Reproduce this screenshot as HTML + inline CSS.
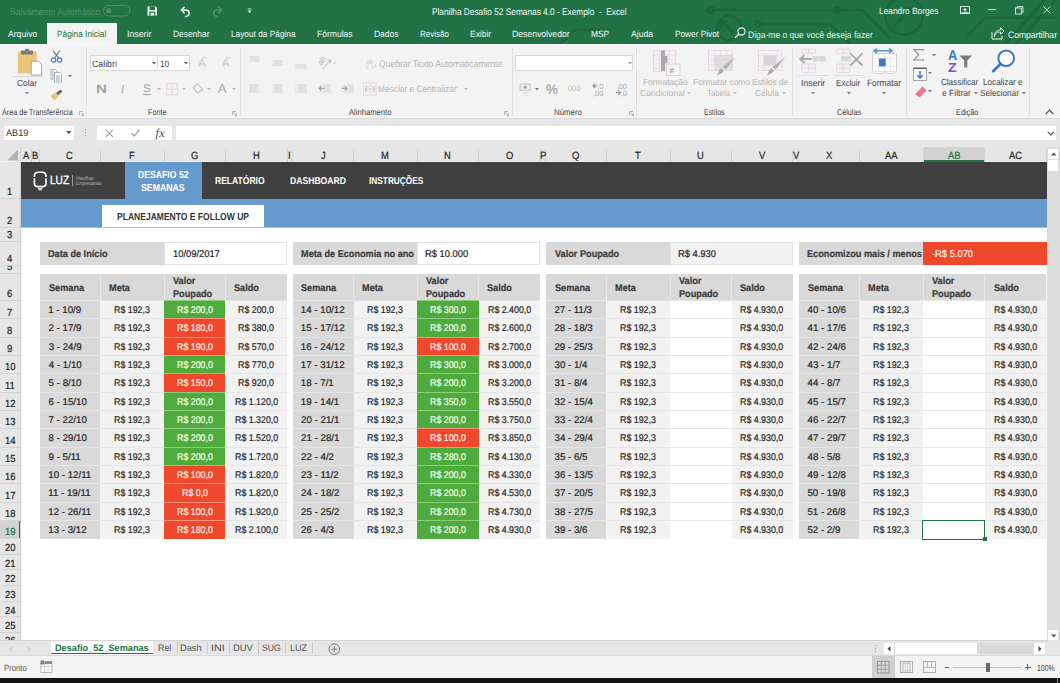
<!DOCTYPE html><html><head><meta charset="utf-8"><style>
html,body{margin:0;padding:0}
body{width:1060px;height:683px;overflow:hidden;position:relative;background:#fff;font-family:"Liberation Sans",sans-serif;text-rendering:geometricPrecision}
.a{position:absolute}
.t{white-space:nowrap;line-height:1;transform-origin:0 0}
.s .t{-webkit-text-stroke:0.2px currentColor}
svg{position:absolute;overflow:visible}
</style></head><body>
<div class="a" style="left:0.00px;top:0.00px;width:1060.00px;height:44.00px;background:#217346;"></div>
<div class="a" style="left:0.00px;top:44.00px;width:1060.00px;height:73.50px;background:#F3F3F3;"></div>
<div class="a" style="left:0.00px;top:44.00px;width:1060.00px;height:1.00px;background:#F9F9F9;"></div>
<div class="a" style="left:0.00px;top:117.50px;width:1060.00px;height:1.00px;background:#DADADA;"></div>
<div class="a" style="left:0.00px;top:118.50px;width:1060.00px;height:28.50px;background:#E6E6E6;"></div>
<div class="a" style="left:0.00px;top:147.00px;width:1046.50px;height:15.00px;background:#E6E6E6;"></div>
<div class="a" style="left:0.00px;top:161.20px;width:1046.50px;height:0.80px;background:#F0F0F0;"></div>
<div class="a" style="left:0.00px;top:162.00px;width:20.00px;height:478.00px;background:#E6E6E6;"></div>
<div class="a" style="left:19.50px;top:147.00px;width:1.00px;height:493.00px;background:#D0D0D0;"></div>
<svg style="left:0;top:147px" width="20" height="15"><path d="M7 13.5 L18 13.5 L18 2.5 Z" fill="#B4B4B4"/></svg>
<div class="a" style="left:99.80px;top:149.00px;width:1.00px;height:12.50px;background:#D2D2D2;"></div>
<div class="a" style="left:163.70px;top:149.00px;width:1.00px;height:12.50px;background:#D2D2D2;"></div>
<div class="a" style="left:225.00px;top:149.00px;width:1.00px;height:12.50px;background:#D2D2D2;"></div>
<div class="a" style="left:286.90px;top:149.00px;width:1.00px;height:12.50px;background:#D2D2D2;"></div>
<div class="a" style="left:291.60px;top:149.00px;width:1.00px;height:12.50px;background:#D2D2D2;"></div>
<div class="a" style="left:353.00px;top:149.00px;width:1.00px;height:12.50px;background:#D2D2D2;"></div>
<div class="a" style="left:416.50px;top:149.00px;width:1.00px;height:12.50px;background:#D2D2D2;"></div>
<div class="a" style="left:478.10px;top:149.00px;width:1.00px;height:12.50px;background:#D2D2D2;"></div>
<div class="a" style="left:539.70px;top:149.00px;width:1.00px;height:12.50px;background:#D2D2D2;"></div>
<div class="a" style="left:545.10px;top:149.00px;width:1.00px;height:12.50px;background:#D2D2D2;"></div>
<div class="a" style="left:606.00px;top:149.00px;width:1.00px;height:12.50px;background:#D2D2D2;"></div>
<div class="a" style="left:669.60px;top:149.00px;width:1.00px;height:12.50px;background:#D2D2D2;"></div>
<div class="a" style="left:731.10px;top:149.00px;width:1.00px;height:12.50px;background:#D2D2D2;"></div>
<div class="a" style="left:792.40px;top:149.00px;width:1.00px;height:12.50px;background:#D2D2D2;"></div>
<div class="a" style="left:798.00px;top:149.00px;width:1.00px;height:12.50px;background:#D2D2D2;"></div>
<div class="a" style="left:858.60px;top:149.00px;width:1.00px;height:12.50px;background:#D2D2D2;"></div>
<div class="a" style="left:922.50px;top:149.00px;width:1.00px;height:12.50px;background:#D2D2D2;"></div>
<div class="a" style="left:984.20px;top:149.00px;width:1.00px;height:12.50px;background:#D2D2D2;"></div>
<div class="a" style="left:1046.00px;top:149.00px;width:1.00px;height:12.50px;background:#D2D2D2;"></div>
<div class="a" style="left:31.00px;top:149.00px;width:1.00px;height:12.50px;background:#D2D2D2;"></div>
<div class="a" style="left:39.00px;top:149.00px;width:1.00px;height:12.50px;background:#D2D2D2;"></div>
<div class="s">
<div class="a t" style="left:22.53px;top:152.00px;font-size:10.43px;color:#1E1E1E;transform:scaleX(0.9000);">A</div>
<div class="a t" style="left:32.14px;top:152.00px;font-size:10.43px;color:#1E1E1E;transform:scaleX(0.9000);">B</div>
<div class="a t" style="left:66.45px;top:152.00px;font-size:10.43px;color:#1E1E1E;transform:scaleX(0.9000);">C</div>
<div class="a t" style="left:129.17px;top:152.00px;font-size:10.43px;color:#1E1E1E;transform:scaleX(0.9000);">F</div>
<div class="a t" style="left:191.30px;top:152.00px;font-size:10.43px;color:#1E1E1E;transform:scaleX(0.9000);">G</div>
<div class="a t" style="left:253.05px;top:152.00px;font-size:10.43px;color:#1E1E1E;transform:scaleX(0.9000);">H</div>
<div class="a t" style="left:288.44px;top:152.00px;font-size:10.43px;color:#1E1E1E;transform:scaleX(0.9000);">I</div>
<div class="a t" style="left:320.71px;top:152.00px;font-size:10.43px;color:#1E1E1E;transform:scaleX(0.9000);">J</div>
<div class="a t" style="left:381.33px;top:152.00px;font-size:10.43px;color:#1E1E1E;transform:scaleX(0.9000);">M</div>
<div class="a t" style="left:444.40px;top:152.00px;font-size:10.43px;color:#1E1E1E;transform:scaleX(0.9000);">N</div>
<div class="a t" style="left:505.76px;top:152.00px;font-size:10.43px;color:#1E1E1E;transform:scaleX(0.9000);">O</div>
<div class="a t" style="left:539.64px;top:152.00px;font-size:10.43px;color:#1E1E1E;transform:scaleX(0.9000);">P</div>
<div class="a t" style="left:572.41px;top:152.00px;font-size:10.43px;color:#1E1E1E;transform:scaleX(0.9000);">Q</div>
<div class="a t" style="left:635.44px;top:152.00px;font-size:10.43px;color:#1E1E1E;transform:scaleX(0.9000);">T</div>
<div class="a t" style="left:697.47px;top:152.00px;font-size:10.43px;color:#1E1E1E;transform:scaleX(0.9000);">U</div>
<div class="a t" style="left:759.13px;top:152.00px;font-size:10.43px;color:#1E1E1E;transform:scaleX(0.9000);">V</div>
<div class="a t" style="left:792.58px;top:152.00px;font-size:10.43px;color:#1E1E1E;transform:scaleX(0.9000);">V</div>
<div class="a t" style="left:825.65px;top:152.00px;font-size:10.43px;color:#1E1E1E;transform:scaleX(0.9000);">X</div>
<div class="a t" style="left:884.80px;top:152.00px;font-size:10.43px;color:#1E1E1E;transform:scaleX(0.9000);">AA</div>
<div class="a" style="left:923.50px;top:147.00px;width:60.70px;height:15.00px;background:#D2D2D2;"></div>
<div class="a" style="left:923.50px;top:160.00px;width:60.70px;height:2.00px;background:#217346;"></div>
<div class="a t" style="left:947.84px;top:152.00px;font-size:10.43px;color:#217346;transform:scaleX(0.9000);">AB</div>
<div class="a t" style="left:1009.26px;top:152.00px;font-size:10.43px;color:#1E1E1E;transform:scaleX(0.9000);">AC</div>
<div class="a" style="left:0.00px;top:198.10px;width:19.50px;height:1.00px;background:#D4D4D4;"></div>
<div class="a" style="left:0;top:162.50px;width:19.5px;height:36.10px;overflow:hidden"><div style="position:relative;left:0;top:-162.50px">
<div class="a t" style="left:7.23px;top:188.00px;font-size:10.29px;color:#222222;transform:scaleX(0.9200);">1</div>
</div></div>
<div class="a" style="left:0.00px;top:227.00px;width:19.50px;height:1.00px;background:#D4D4D4;"></div>
<div class="a" style="left:0;top:198.60px;width:19.5px;height:28.90px;overflow:hidden"><div style="position:relative;left:0;top:-198.60px">
<div class="a t" style="left:7.35px;top:217.00px;font-size:10.29px;color:#222222;transform:scaleX(0.9200);">2</div>
</div></div>
<div class="a" style="left:0.00px;top:240.80px;width:19.50px;height:1.00px;background:#D4D4D4;"></div>
<div class="a" style="left:0;top:227.50px;width:19.5px;height:13.80px;overflow:hidden"><div style="position:relative;left:0;top:-227.50px">
<div class="a t" style="left:7.40px;top:231.00px;font-size:10.29px;color:#222222;transform:scaleX(0.9200);">3</div>
</div></div>
<div class="a" style="left:0.00px;top:265.00px;width:19.50px;height:1.00px;background:#D4D4D4;"></div>
<div class="a" style="left:0;top:241.30px;width:19.5px;height:24.20px;overflow:hidden"><div style="position:relative;left:0;top:-241.30px">
<div class="a t" style="left:7.40px;top:255.00px;font-size:10.29px;color:#222222;transform:scaleX(0.9200);">4</div>
</div></div>
<div class="a" style="left:0.00px;top:272.90px;width:19.50px;height:1.00px;background:#D4D4D4;"></div>
<div class="a" style="left:0;top:265.50px;width:19.5px;height:7.90px;overflow:hidden"><div style="position:relative;left:0;top:-265.50px">
<div class="a t" style="left:7.37px;top:263.00px;font-size:10.29px;color:#222222;transform:scaleX(0.9200);">5</div>
</div></div>
<div class="a" style="left:0.00px;top:300.00px;width:19.50px;height:1.00px;background:#D4D4D4;"></div>
<div class="a" style="left:0;top:273.40px;width:19.5px;height:27.10px;overflow:hidden"><div style="position:relative;left:0;top:-273.40px">
<div class="a t" style="left:7.33px;top:290.00px;font-size:10.29px;color:#222222;transform:scaleX(0.9200);">6</div>
</div></div>
<div class="a" style="left:0.00px;top:318.32px;width:19.50px;height:1.00px;background:#D4D4D4;"></div>
<div class="a" style="left:0;top:300.50px;width:19.5px;height:18.32px;overflow:hidden"><div style="position:relative;left:0;top:-300.50px">
<div class="a t" style="left:7.35px;top:309.00px;font-size:10.29px;color:#222222;transform:scaleX(0.9200);">7</div>
</div></div>
<div class="a" style="left:0.00px;top:336.64px;width:19.50px;height:1.00px;background:#D4D4D4;"></div>
<div class="a" style="left:0;top:318.82px;width:19.5px;height:18.32px;overflow:hidden"><div style="position:relative;left:0;top:-318.82px">
<div class="a t" style="left:7.37px;top:327.00px;font-size:10.29px;color:#222222;transform:scaleX(0.9200);">8</div>
</div></div>
<div class="a" style="left:0.00px;top:354.96px;width:19.50px;height:1.00px;background:#D4D4D4;"></div>
<div class="a" style="left:0;top:337.14px;width:19.5px;height:18.32px;overflow:hidden"><div style="position:relative;left:0;top:-337.14px">
<div class="a t" style="left:7.37px;top:345.00px;font-size:10.29px;color:#222222;transform:scaleX(0.9200);">9</div>
</div></div>
<div class="a" style="left:0.00px;top:373.28px;width:19.50px;height:1.00px;background:#D4D4D4;"></div>
<div class="a" style="left:0;top:355.46px;width:19.5px;height:18.32px;overflow:hidden"><div style="position:relative;left:0;top:-355.46px">
<div class="a t" style="left:4.56px;top:363.00px;font-size:10.29px;color:#222222;transform:scaleX(0.9200);">10</div>
</div></div>
<div class="a" style="left:0.00px;top:391.60px;width:19.50px;height:1.00px;background:#D4D4D4;"></div>
<div class="a" style="left:0;top:373.78px;width:19.5px;height:18.32px;overflow:hidden"><div style="position:relative;left:0;top:-373.78px">
<div class="a t" style="left:4.96px;top:382.00px;font-size:10.29px;color:#222222;transform:scaleX(0.9200);">11</div>
</div></div>
<div class="a" style="left:0.00px;top:409.92px;width:19.50px;height:1.00px;background:#D4D4D4;"></div>
<div class="a" style="left:0;top:392.10px;width:19.5px;height:18.32px;overflow:hidden"><div style="position:relative;left:0;top:-392.10px">
<div class="a t" style="left:4.60px;top:400.00px;font-size:10.29px;color:#222222;transform:scaleX(0.9200);">12</div>
</div></div>
<div class="a" style="left:0.00px;top:428.24px;width:19.50px;height:1.00px;background:#D4D4D4;"></div>
<div class="a" style="left:0;top:410.42px;width:19.5px;height:18.32px;overflow:hidden"><div style="position:relative;left:0;top:-410.42px">
<div class="a t" style="left:4.58px;top:418.00px;font-size:10.29px;color:#222222;transform:scaleX(0.9200);">13</div>
</div></div>
<div class="a" style="left:0.00px;top:446.56px;width:19.50px;height:1.00px;background:#D4D4D4;"></div>
<div class="a" style="left:0;top:428.74px;width:19.5px;height:18.32px;overflow:hidden"><div style="position:relative;left:0;top:-428.74px">
<div class="a t" style="left:4.51px;top:437.00px;font-size:10.29px;color:#222222;transform:scaleX(0.9200);">14</div>
</div></div>
<div class="a" style="left:0.00px;top:464.88px;width:19.50px;height:1.00px;background:#D4D4D4;"></div>
<div class="a" style="left:0;top:447.06px;width:19.5px;height:18.32px;overflow:hidden"><div style="position:relative;left:0;top:-447.06px">
<div class="a t" style="left:4.58px;top:455.00px;font-size:10.29px;color:#222222;transform:scaleX(0.9200);">15</div>
</div></div>
<div class="a" style="left:0.00px;top:483.20px;width:19.50px;height:1.00px;background:#D4D4D4;"></div>
<div class="a" style="left:0;top:465.38px;width:19.5px;height:18.32px;overflow:hidden"><div style="position:relative;left:0;top:-465.38px">
<div class="a t" style="left:4.58px;top:473.00px;font-size:10.29px;color:#222222;transform:scaleX(0.9200);">16</div>
</div></div>
<div class="a" style="left:0.00px;top:501.52px;width:19.50px;height:1.00px;background:#D4D4D4;"></div>
<div class="a" style="left:0;top:483.70px;width:19.5px;height:18.32px;overflow:hidden"><div style="position:relative;left:0;top:-483.70px">
<div class="a t" style="left:4.60px;top:492.00px;font-size:10.29px;color:#222222;transform:scaleX(0.9200);">17</div>
</div></div>
<div class="a" style="left:0.00px;top:519.84px;width:19.50px;height:1.00px;background:#D4D4D4;"></div>
<div class="a" style="left:0;top:502.02px;width:19.5px;height:18.32px;overflow:hidden"><div style="position:relative;left:0;top:-502.02px">
<div class="a t" style="left:4.58px;top:510.00px;font-size:10.29px;color:#222222;transform:scaleX(0.9200);">18</div>
</div></div>
<div class="a" style="left:0.00px;top:538.16px;width:19.50px;height:1.00px;background:#D4D4D4;"></div>
<div class="a" style="left:0.00px;top:520.84px;width:19.50px;height:17.32px;background:#D2D2D2;"></div>
<div class="a" style="left:18.60px;top:520.84px;width:1.40px;height:17.32px;background:#217346;"></div>
<div class="a" style="left:0;top:520.34px;width:19.5px;height:18.32px;overflow:hidden"><div style="position:relative;left:0;top:-520.34px">
<div class="a t" style="left:4.60px;top:528.00px;font-size:10.29px;color:#217346;transform:scaleX(0.9200);">19</div>
</div></div>
<div class="a" style="left:0.00px;top:553.56px;width:19.50px;height:1.00px;background:#D4D4D4;"></div>
<div class="a" style="left:0;top:538.66px;width:19.5px;height:15.40px;overflow:hidden"><div style="position:relative;left:0;top:-538.66px">
<div class="a t" style="left:4.67px;top:544.00px;font-size:10.29px;color:#222222;transform:scaleX(0.9200);">20</div>
</div></div>
<div class="a" style="left:0.00px;top:569.46px;width:19.50px;height:1.00px;background:#D4D4D4;"></div>
<div class="a" style="left:0;top:554.06px;width:19.5px;height:15.90px;overflow:hidden"><div style="position:relative;left:0;top:-554.06px">
<div class="a t" style="left:4.72px;top:560.00px;font-size:10.29px;color:#222222;transform:scaleX(0.9200);">21</div>
</div></div>
<div class="a" style="left:0.00px;top:584.96px;width:19.50px;height:1.00px;background:#D4D4D4;"></div>
<div class="a" style="left:0;top:569.96px;width:19.5px;height:15.50px;overflow:hidden"><div style="position:relative;left:0;top:-569.96px">
<div class="a t" style="left:4.72px;top:575.00px;font-size:10.29px;color:#222222;transform:scaleX(0.9200);">22</div>
</div></div>
<div class="a" style="left:0.00px;top:600.86px;width:19.50px;height:1.00px;background:#D4D4D4;"></div>
<div class="a" style="left:0;top:585.46px;width:19.5px;height:15.90px;overflow:hidden"><div style="position:relative;left:0;top:-585.46px">
<div class="a t" style="left:4.70px;top:591.00px;font-size:10.29px;color:#222222;transform:scaleX(0.9200);">23</div>
</div></div>
<div class="a" style="left:0.00px;top:616.46px;width:19.50px;height:1.00px;background:#D4D4D4;"></div>
<div class="a" style="left:0;top:601.36px;width:19.5px;height:15.60px;overflow:hidden"><div style="position:relative;left:0;top:-601.36px">
<div class="a t" style="left:4.63px;top:607.00px;font-size:10.29px;color:#222222;transform:scaleX(0.9200);">24</div>
</div></div>
<div class="a" style="left:0.00px;top:631.96px;width:19.50px;height:1.00px;background:#D4D4D4;"></div>
<div class="a" style="left:0;top:616.96px;width:19.5px;height:15.50px;overflow:hidden"><div style="position:relative;left:0;top:-616.96px">
<div class="a t" style="left:4.70px;top:622.00px;font-size:10.29px;color:#222222;transform:scaleX(0.9200);">25</div>
</div></div>
<div class="a" style="left:0.00px;top:647.66px;width:19.50px;height:1.00px;background:#D4D4D4;"></div>
<div class="a" style="left:0;top:632.46px;width:19.5px;height:15.70px;overflow:hidden"><div style="position:relative;left:0;top:-632.46px">
<div class="a t" style="left:4.70px;top:637.00px;font-size:10.29px;color:#222222;transform:scaleX(0.9200);">26</div>
</div></div>
</div>
<div class="a" style="left:20.50px;top:162.00px;width:1026.00px;height:36.60px;background:#404040;"></div>
<div class="a" style="left:20.50px;top:198.60px;width:1026.00px;height:28.40px;background:#6699CC;"></div>
<div class="a" style="left:125.30px;top:162.00px;width:77.00px;height:36.60px;background:#6699CC;"></div>
<div class="a" style="left:101.80px;top:205.00px;width:162.40px;height:22.50px;background:#FFFFFF;"></div>
<div class="a" style="left:20.50px;top:227.00px;width:1026.00px;height:1.00px;background:#BDBDBD;"></div>
<div class="a" style="left:39.90px;top:241.80px;width:124.30px;height:23.20px;background:#D9D9D9;"></div>
<div class="a" style="left:164.20px;top:241.80px;width:123.20px;height:23.20px;background:#FFFFFF;box-sizing:border-box;border:1px solid #E4E4E4;"></div>
<div class="a" style="left:39.90px;top:273.90px;width:247.50px;height:26.60px;background:#D9D9D9;"></div>
<div class="a" style="left:99.80px;top:273.90px;width:1.00px;height:26.60px;background:#E9E9E9;"></div>
<div class="a" style="left:163.70px;top:273.90px;width:1.00px;height:26.60px;background:#E9E9E9;"></div>
<div class="a" style="left:225.00px;top:273.90px;width:1.00px;height:26.60px;background:#E9E9E9;"></div>
<div class="a" style="left:39.90px;top:300.50px;width:60.40px;height:18.32px;background:#D9D9D9;"></div>
<div class="a" style="left:100.30px;top:300.50px;width:63.90px;height:18.32px;background:#F2F2F2;"></div>
<div class="a" style="left:164.20px;top:300.50px;width:61.30px;height:18.32px;background:#50AB3D;"></div>
<div class="a" style="left:225.50px;top:300.50px;width:61.90px;height:18.32px;background:#F2F2F2;"></div>
<div class="a" style="left:39.90px;top:300.00px;width:247.50px;height:1.00px;background:#E6E6E6;"></div>
<div class="a" style="left:164.20px;top:300.00px;width:61.30px;height:1.00px;background:#8FCB80;"></div>
<div class="a" style="left:39.90px;top:318.82px;width:60.40px;height:18.32px;background:#D9D9D9;"></div>
<div class="a" style="left:100.30px;top:318.82px;width:63.90px;height:18.32px;background:#F2F2F2;"></div>
<div class="a" style="left:164.20px;top:318.82px;width:61.30px;height:18.32px;background:#F0482C;"></div>
<div class="a" style="left:225.50px;top:318.82px;width:61.90px;height:18.32px;background:#F2F2F2;"></div>
<div class="a" style="left:39.90px;top:318.32px;width:247.50px;height:1.00px;background:#E6E6E6;"></div>
<div class="a" style="left:164.20px;top:318.32px;width:61.30px;height:1.00px;background:#F5917F;"></div>
<div class="a" style="left:39.90px;top:337.14px;width:60.40px;height:18.32px;background:#D9D9D9;"></div>
<div class="a" style="left:100.30px;top:337.14px;width:63.90px;height:18.32px;background:#F2F2F2;"></div>
<div class="a" style="left:164.20px;top:337.14px;width:61.30px;height:18.32px;background:#F0482C;"></div>
<div class="a" style="left:225.50px;top:337.14px;width:61.90px;height:18.32px;background:#F2F2F2;"></div>
<div class="a" style="left:39.90px;top:336.64px;width:247.50px;height:1.00px;background:#E6E6E6;"></div>
<div class="a" style="left:164.20px;top:336.64px;width:61.30px;height:1.00px;background:#F5917F;"></div>
<div class="a" style="left:39.90px;top:355.46px;width:60.40px;height:18.32px;background:#D9D9D9;"></div>
<div class="a" style="left:100.30px;top:355.46px;width:63.90px;height:18.32px;background:#F2F2F2;"></div>
<div class="a" style="left:164.20px;top:355.46px;width:61.30px;height:18.32px;background:#50AB3D;"></div>
<div class="a" style="left:225.50px;top:355.46px;width:61.90px;height:18.32px;background:#F2F2F2;"></div>
<div class="a" style="left:39.90px;top:354.96px;width:247.50px;height:1.00px;background:#E6E6E6;"></div>
<div class="a" style="left:164.20px;top:354.96px;width:61.30px;height:1.00px;background:#8FCB80;"></div>
<div class="a" style="left:39.90px;top:373.78px;width:60.40px;height:18.32px;background:#D9D9D9;"></div>
<div class="a" style="left:100.30px;top:373.78px;width:63.90px;height:18.32px;background:#F2F2F2;"></div>
<div class="a" style="left:164.20px;top:373.78px;width:61.30px;height:18.32px;background:#F0482C;"></div>
<div class="a" style="left:225.50px;top:373.78px;width:61.90px;height:18.32px;background:#F2F2F2;"></div>
<div class="a" style="left:39.90px;top:373.28px;width:247.50px;height:1.00px;background:#E6E6E6;"></div>
<div class="a" style="left:164.20px;top:373.28px;width:61.30px;height:1.00px;background:#F5917F;"></div>
<div class="a" style="left:39.90px;top:392.10px;width:60.40px;height:18.32px;background:#D9D9D9;"></div>
<div class="a" style="left:100.30px;top:392.10px;width:63.90px;height:18.32px;background:#F2F2F2;"></div>
<div class="a" style="left:164.20px;top:392.10px;width:61.30px;height:18.32px;background:#50AB3D;"></div>
<div class="a" style="left:225.50px;top:392.10px;width:61.90px;height:18.32px;background:#F2F2F2;"></div>
<div class="a" style="left:39.90px;top:391.60px;width:247.50px;height:1.00px;background:#E6E6E6;"></div>
<div class="a" style="left:164.20px;top:391.60px;width:61.30px;height:1.00px;background:#8FCB80;"></div>
<div class="a" style="left:39.90px;top:410.42px;width:60.40px;height:18.32px;background:#D9D9D9;"></div>
<div class="a" style="left:100.30px;top:410.42px;width:63.90px;height:18.32px;background:#F2F2F2;"></div>
<div class="a" style="left:164.20px;top:410.42px;width:61.30px;height:18.32px;background:#50AB3D;"></div>
<div class="a" style="left:225.50px;top:410.42px;width:61.90px;height:18.32px;background:#F2F2F2;"></div>
<div class="a" style="left:39.90px;top:409.92px;width:247.50px;height:1.00px;background:#E6E6E6;"></div>
<div class="a" style="left:164.20px;top:409.92px;width:61.30px;height:1.00px;background:#8FCB80;"></div>
<div class="a" style="left:39.90px;top:428.74px;width:60.40px;height:18.32px;background:#D9D9D9;"></div>
<div class="a" style="left:100.30px;top:428.74px;width:63.90px;height:18.32px;background:#F2F2F2;"></div>
<div class="a" style="left:164.20px;top:428.74px;width:61.30px;height:18.32px;background:#50AB3D;"></div>
<div class="a" style="left:225.50px;top:428.74px;width:61.90px;height:18.32px;background:#F2F2F2;"></div>
<div class="a" style="left:39.90px;top:428.24px;width:247.50px;height:1.00px;background:#E6E6E6;"></div>
<div class="a" style="left:164.20px;top:428.24px;width:61.30px;height:1.00px;background:#8FCB80;"></div>
<div class="a" style="left:39.90px;top:447.06px;width:60.40px;height:18.32px;background:#D9D9D9;"></div>
<div class="a" style="left:100.30px;top:447.06px;width:63.90px;height:18.32px;background:#F2F2F2;"></div>
<div class="a" style="left:164.20px;top:447.06px;width:61.30px;height:18.32px;background:#50AB3D;"></div>
<div class="a" style="left:225.50px;top:447.06px;width:61.90px;height:18.32px;background:#F2F2F2;"></div>
<div class="a" style="left:39.90px;top:446.56px;width:247.50px;height:1.00px;background:#E6E6E6;"></div>
<div class="a" style="left:164.20px;top:446.56px;width:61.30px;height:1.00px;background:#8FCB80;"></div>
<div class="a" style="left:39.90px;top:465.38px;width:60.40px;height:18.32px;background:#D9D9D9;"></div>
<div class="a" style="left:100.30px;top:465.38px;width:63.90px;height:18.32px;background:#F2F2F2;"></div>
<div class="a" style="left:164.20px;top:465.38px;width:61.30px;height:18.32px;background:#F0482C;"></div>
<div class="a" style="left:225.50px;top:465.38px;width:61.90px;height:18.32px;background:#F2F2F2;"></div>
<div class="a" style="left:39.90px;top:464.88px;width:247.50px;height:1.00px;background:#E6E6E6;"></div>
<div class="a" style="left:164.20px;top:464.88px;width:61.30px;height:1.00px;background:#F5917F;"></div>
<div class="a" style="left:39.90px;top:483.70px;width:60.40px;height:18.32px;background:#D9D9D9;"></div>
<div class="a" style="left:100.30px;top:483.70px;width:63.90px;height:18.32px;background:#F2F2F2;"></div>
<div class="a" style="left:164.20px;top:483.70px;width:61.30px;height:18.32px;background:#F0482C;"></div>
<div class="a" style="left:225.50px;top:483.70px;width:61.90px;height:18.32px;background:#F2F2F2;"></div>
<div class="a" style="left:39.90px;top:483.20px;width:247.50px;height:1.00px;background:#E6E6E6;"></div>
<div class="a" style="left:164.20px;top:483.20px;width:61.30px;height:1.00px;background:#F5917F;"></div>
<div class="a" style="left:39.90px;top:502.02px;width:60.40px;height:18.32px;background:#D9D9D9;"></div>
<div class="a" style="left:100.30px;top:502.02px;width:63.90px;height:18.32px;background:#F2F2F2;"></div>
<div class="a" style="left:164.20px;top:502.02px;width:61.30px;height:18.32px;background:#F0482C;"></div>
<div class="a" style="left:225.50px;top:502.02px;width:61.90px;height:18.32px;background:#F2F2F2;"></div>
<div class="a" style="left:39.90px;top:501.52px;width:247.50px;height:1.00px;background:#E6E6E6;"></div>
<div class="a" style="left:164.20px;top:501.52px;width:61.30px;height:1.00px;background:#F5917F;"></div>
<div class="a" style="left:39.90px;top:520.34px;width:60.40px;height:18.32px;background:#D9D9D9;"></div>
<div class="a" style="left:100.30px;top:520.34px;width:63.90px;height:18.32px;background:#F2F2F2;"></div>
<div class="a" style="left:164.20px;top:520.34px;width:61.30px;height:18.32px;background:#F0482C;"></div>
<div class="a" style="left:225.50px;top:520.34px;width:61.90px;height:18.32px;background:#F2F2F2;"></div>
<div class="a" style="left:39.90px;top:519.84px;width:247.50px;height:1.00px;background:#E6E6E6;"></div>
<div class="a" style="left:164.20px;top:519.84px;width:61.30px;height:1.00px;background:#F5917F;"></div>
<div class="a" style="left:292.50px;top:241.80px;width:124.50px;height:23.20px;background:#D9D9D9;"></div>
<div class="a" style="left:417.00px;top:241.80px;width:123.20px;height:23.20px;background:#FFFFFF;box-sizing:border-box;border:1px solid #E4E4E4;"></div>
<div class="a" style="left:292.50px;top:273.90px;width:247.70px;height:26.60px;background:#D9D9D9;"></div>
<div class="a" style="left:353.00px;top:273.90px;width:1.00px;height:26.60px;background:#E9E9E9;"></div>
<div class="a" style="left:416.50px;top:273.90px;width:1.00px;height:26.60px;background:#E9E9E9;"></div>
<div class="a" style="left:478.10px;top:273.90px;width:1.00px;height:26.60px;background:#E9E9E9;"></div>
<div class="a" style="left:292.50px;top:300.50px;width:61.00px;height:18.32px;background:#D9D9D9;"></div>
<div class="a" style="left:353.50px;top:300.50px;width:63.50px;height:18.32px;background:#F2F2F2;"></div>
<div class="a" style="left:417.00px;top:300.50px;width:61.60px;height:18.32px;background:#50AB3D;"></div>
<div class="a" style="left:478.60px;top:300.50px;width:61.60px;height:18.32px;background:#F2F2F2;"></div>
<div class="a" style="left:292.50px;top:300.00px;width:247.70px;height:1.00px;background:#E6E6E6;"></div>
<div class="a" style="left:417.00px;top:300.00px;width:61.60px;height:1.00px;background:#8FCB80;"></div>
<div class="a" style="left:292.50px;top:318.82px;width:61.00px;height:18.32px;background:#D9D9D9;"></div>
<div class="a" style="left:353.50px;top:318.82px;width:63.50px;height:18.32px;background:#F2F2F2;"></div>
<div class="a" style="left:417.00px;top:318.82px;width:61.60px;height:18.32px;background:#50AB3D;"></div>
<div class="a" style="left:478.60px;top:318.82px;width:61.60px;height:18.32px;background:#F2F2F2;"></div>
<div class="a" style="left:292.50px;top:318.32px;width:247.70px;height:1.00px;background:#E6E6E6;"></div>
<div class="a" style="left:417.00px;top:318.32px;width:61.60px;height:1.00px;background:#8FCB80;"></div>
<div class="a" style="left:292.50px;top:337.14px;width:61.00px;height:18.32px;background:#D9D9D9;"></div>
<div class="a" style="left:353.50px;top:337.14px;width:63.50px;height:18.32px;background:#F2F2F2;"></div>
<div class="a" style="left:417.00px;top:337.14px;width:61.60px;height:18.32px;background:#F0482C;"></div>
<div class="a" style="left:478.60px;top:337.14px;width:61.60px;height:18.32px;background:#F2F2F2;"></div>
<div class="a" style="left:292.50px;top:336.64px;width:247.70px;height:1.00px;background:#E6E6E6;"></div>
<div class="a" style="left:417.00px;top:336.64px;width:61.60px;height:1.00px;background:#F5917F;"></div>
<div class="a" style="left:292.50px;top:355.46px;width:61.00px;height:18.32px;background:#D9D9D9;"></div>
<div class="a" style="left:353.50px;top:355.46px;width:63.50px;height:18.32px;background:#F2F2F2;"></div>
<div class="a" style="left:417.00px;top:355.46px;width:61.60px;height:18.32px;background:#50AB3D;"></div>
<div class="a" style="left:478.60px;top:355.46px;width:61.60px;height:18.32px;background:#F2F2F2;"></div>
<div class="a" style="left:292.50px;top:354.96px;width:247.70px;height:1.00px;background:#E6E6E6;"></div>
<div class="a" style="left:417.00px;top:354.96px;width:61.60px;height:1.00px;background:#8FCB80;"></div>
<div class="a" style="left:292.50px;top:373.78px;width:61.00px;height:18.32px;background:#D9D9D9;"></div>
<div class="a" style="left:353.50px;top:373.78px;width:63.50px;height:18.32px;background:#F2F2F2;"></div>
<div class="a" style="left:417.00px;top:373.78px;width:61.60px;height:18.32px;background:#50AB3D;"></div>
<div class="a" style="left:478.60px;top:373.78px;width:61.60px;height:18.32px;background:#F2F2F2;"></div>
<div class="a" style="left:292.50px;top:373.28px;width:247.70px;height:1.00px;background:#E6E6E6;"></div>
<div class="a" style="left:417.00px;top:373.28px;width:61.60px;height:1.00px;background:#8FCB80;"></div>
<div class="a" style="left:292.50px;top:392.10px;width:61.00px;height:18.32px;background:#D9D9D9;"></div>
<div class="a" style="left:353.50px;top:392.10px;width:63.50px;height:18.32px;background:#F2F2F2;"></div>
<div class="a" style="left:417.00px;top:392.10px;width:61.60px;height:18.32px;background:#50AB3D;"></div>
<div class="a" style="left:478.60px;top:392.10px;width:61.60px;height:18.32px;background:#F2F2F2;"></div>
<div class="a" style="left:292.50px;top:391.60px;width:247.70px;height:1.00px;background:#E6E6E6;"></div>
<div class="a" style="left:417.00px;top:391.60px;width:61.60px;height:1.00px;background:#8FCB80;"></div>
<div class="a" style="left:292.50px;top:410.42px;width:61.00px;height:18.32px;background:#D9D9D9;"></div>
<div class="a" style="left:353.50px;top:410.42px;width:63.50px;height:18.32px;background:#F2F2F2;"></div>
<div class="a" style="left:417.00px;top:410.42px;width:61.60px;height:18.32px;background:#50AB3D;"></div>
<div class="a" style="left:478.60px;top:410.42px;width:61.60px;height:18.32px;background:#F2F2F2;"></div>
<div class="a" style="left:292.50px;top:409.92px;width:247.70px;height:1.00px;background:#E6E6E6;"></div>
<div class="a" style="left:417.00px;top:409.92px;width:61.60px;height:1.00px;background:#8FCB80;"></div>
<div class="a" style="left:292.50px;top:428.74px;width:61.00px;height:18.32px;background:#D9D9D9;"></div>
<div class="a" style="left:353.50px;top:428.74px;width:63.50px;height:18.32px;background:#F2F2F2;"></div>
<div class="a" style="left:417.00px;top:428.74px;width:61.60px;height:18.32px;background:#F0482C;"></div>
<div class="a" style="left:478.60px;top:428.74px;width:61.60px;height:18.32px;background:#F2F2F2;"></div>
<div class="a" style="left:292.50px;top:428.24px;width:247.70px;height:1.00px;background:#E6E6E6;"></div>
<div class="a" style="left:417.00px;top:428.24px;width:61.60px;height:1.00px;background:#F5917F;"></div>
<div class="a" style="left:292.50px;top:447.06px;width:61.00px;height:18.32px;background:#D9D9D9;"></div>
<div class="a" style="left:353.50px;top:447.06px;width:63.50px;height:18.32px;background:#F2F2F2;"></div>
<div class="a" style="left:417.00px;top:447.06px;width:61.60px;height:18.32px;background:#50AB3D;"></div>
<div class="a" style="left:478.60px;top:447.06px;width:61.60px;height:18.32px;background:#F2F2F2;"></div>
<div class="a" style="left:292.50px;top:446.56px;width:247.70px;height:1.00px;background:#E6E6E6;"></div>
<div class="a" style="left:417.00px;top:446.56px;width:61.60px;height:1.00px;background:#8FCB80;"></div>
<div class="a" style="left:292.50px;top:465.38px;width:61.00px;height:18.32px;background:#D9D9D9;"></div>
<div class="a" style="left:353.50px;top:465.38px;width:63.50px;height:18.32px;background:#F2F2F2;"></div>
<div class="a" style="left:417.00px;top:465.38px;width:61.60px;height:18.32px;background:#50AB3D;"></div>
<div class="a" style="left:478.60px;top:465.38px;width:61.60px;height:18.32px;background:#F2F2F2;"></div>
<div class="a" style="left:292.50px;top:464.88px;width:247.70px;height:1.00px;background:#E6E6E6;"></div>
<div class="a" style="left:417.00px;top:464.88px;width:61.60px;height:1.00px;background:#8FCB80;"></div>
<div class="a" style="left:292.50px;top:483.70px;width:61.00px;height:18.32px;background:#D9D9D9;"></div>
<div class="a" style="left:353.50px;top:483.70px;width:63.50px;height:18.32px;background:#F2F2F2;"></div>
<div class="a" style="left:417.00px;top:483.70px;width:61.60px;height:18.32px;background:#50AB3D;"></div>
<div class="a" style="left:478.60px;top:483.70px;width:61.60px;height:18.32px;background:#F2F2F2;"></div>
<div class="a" style="left:292.50px;top:483.20px;width:247.70px;height:1.00px;background:#E6E6E6;"></div>
<div class="a" style="left:417.00px;top:483.20px;width:61.60px;height:1.00px;background:#8FCB80;"></div>
<div class="a" style="left:292.50px;top:502.02px;width:61.00px;height:18.32px;background:#D9D9D9;"></div>
<div class="a" style="left:353.50px;top:502.02px;width:63.50px;height:18.32px;background:#F2F2F2;"></div>
<div class="a" style="left:417.00px;top:502.02px;width:61.60px;height:18.32px;background:#50AB3D;"></div>
<div class="a" style="left:478.60px;top:502.02px;width:61.60px;height:18.32px;background:#F2F2F2;"></div>
<div class="a" style="left:292.50px;top:501.52px;width:247.70px;height:1.00px;background:#E6E6E6;"></div>
<div class="a" style="left:417.00px;top:501.52px;width:61.60px;height:1.00px;background:#8FCB80;"></div>
<div class="a" style="left:292.50px;top:520.34px;width:61.00px;height:18.32px;background:#D9D9D9;"></div>
<div class="a" style="left:353.50px;top:520.34px;width:63.50px;height:18.32px;background:#F2F2F2;"></div>
<div class="a" style="left:417.00px;top:520.34px;width:61.60px;height:18.32px;background:#50AB3D;"></div>
<div class="a" style="left:478.60px;top:520.34px;width:61.60px;height:18.32px;background:#F2F2F2;"></div>
<div class="a" style="left:292.50px;top:519.84px;width:247.70px;height:1.00px;background:#E6E6E6;"></div>
<div class="a" style="left:417.00px;top:519.84px;width:61.60px;height:1.00px;background:#8FCB80;"></div>
<div class="a" style="left:545.80px;top:241.80px;width:124.30px;height:23.20px;background:#D9D9D9;"></div>
<div class="a" style="left:670.10px;top:241.80px;width:122.80px;height:23.20px;background:#F2F2F2;box-sizing:border-box;border:1px solid #E4E4E4;"></div>
<div class="a" style="left:545.80px;top:273.90px;width:247.10px;height:26.60px;background:#D9D9D9;"></div>
<div class="a" style="left:606.00px;top:273.90px;width:1.00px;height:26.60px;background:#E9E9E9;"></div>
<div class="a" style="left:669.60px;top:273.90px;width:1.00px;height:26.60px;background:#E9E9E9;"></div>
<div class="a" style="left:731.10px;top:273.90px;width:1.00px;height:26.60px;background:#E9E9E9;"></div>
<div class="a" style="left:545.80px;top:300.50px;width:60.70px;height:18.32px;background:#D9D9D9;"></div>
<div class="a" style="left:606.50px;top:300.50px;width:63.60px;height:18.32px;background:#F2F2F2;"></div>
<div class="a" style="left:670.10px;top:300.50px;width:61.50px;height:18.32px;background:#FFFFFF;"></div>
<div class="a" style="left:731.60px;top:300.50px;width:61.30px;height:18.32px;background:#F2F2F2;"></div>
<div class="a" style="left:545.80px;top:300.00px;width:247.10px;height:1.00px;background:#E6E6E6;"></div>
<div class="a" style="left:545.80px;top:318.82px;width:60.70px;height:18.32px;background:#D9D9D9;"></div>
<div class="a" style="left:606.50px;top:318.82px;width:63.60px;height:18.32px;background:#F2F2F2;"></div>
<div class="a" style="left:670.10px;top:318.82px;width:61.50px;height:18.32px;background:#FFFFFF;"></div>
<div class="a" style="left:731.60px;top:318.82px;width:61.30px;height:18.32px;background:#F2F2F2;"></div>
<div class="a" style="left:545.80px;top:318.32px;width:247.10px;height:1.00px;background:#E6E6E6;"></div>
<div class="a" style="left:545.80px;top:337.14px;width:60.70px;height:18.32px;background:#D9D9D9;"></div>
<div class="a" style="left:606.50px;top:337.14px;width:63.60px;height:18.32px;background:#F2F2F2;"></div>
<div class="a" style="left:670.10px;top:337.14px;width:61.50px;height:18.32px;background:#FFFFFF;"></div>
<div class="a" style="left:731.60px;top:337.14px;width:61.30px;height:18.32px;background:#F2F2F2;"></div>
<div class="a" style="left:545.80px;top:336.64px;width:247.10px;height:1.00px;background:#E6E6E6;"></div>
<div class="a" style="left:545.80px;top:355.46px;width:60.70px;height:18.32px;background:#D9D9D9;"></div>
<div class="a" style="left:606.50px;top:355.46px;width:63.60px;height:18.32px;background:#F2F2F2;"></div>
<div class="a" style="left:670.10px;top:355.46px;width:61.50px;height:18.32px;background:#FFFFFF;"></div>
<div class="a" style="left:731.60px;top:355.46px;width:61.30px;height:18.32px;background:#F2F2F2;"></div>
<div class="a" style="left:545.80px;top:354.96px;width:247.10px;height:1.00px;background:#E6E6E6;"></div>
<div class="a" style="left:545.80px;top:373.78px;width:60.70px;height:18.32px;background:#D9D9D9;"></div>
<div class="a" style="left:606.50px;top:373.78px;width:63.60px;height:18.32px;background:#F2F2F2;"></div>
<div class="a" style="left:670.10px;top:373.78px;width:61.50px;height:18.32px;background:#FFFFFF;"></div>
<div class="a" style="left:731.60px;top:373.78px;width:61.30px;height:18.32px;background:#F2F2F2;"></div>
<div class="a" style="left:545.80px;top:373.28px;width:247.10px;height:1.00px;background:#E6E6E6;"></div>
<div class="a" style="left:545.80px;top:392.10px;width:60.70px;height:18.32px;background:#D9D9D9;"></div>
<div class="a" style="left:606.50px;top:392.10px;width:63.60px;height:18.32px;background:#F2F2F2;"></div>
<div class="a" style="left:670.10px;top:392.10px;width:61.50px;height:18.32px;background:#FFFFFF;"></div>
<div class="a" style="left:731.60px;top:392.10px;width:61.30px;height:18.32px;background:#F2F2F2;"></div>
<div class="a" style="left:545.80px;top:391.60px;width:247.10px;height:1.00px;background:#E6E6E6;"></div>
<div class="a" style="left:545.80px;top:410.42px;width:60.70px;height:18.32px;background:#D9D9D9;"></div>
<div class="a" style="left:606.50px;top:410.42px;width:63.60px;height:18.32px;background:#F2F2F2;"></div>
<div class="a" style="left:670.10px;top:410.42px;width:61.50px;height:18.32px;background:#FFFFFF;"></div>
<div class="a" style="left:731.60px;top:410.42px;width:61.30px;height:18.32px;background:#F2F2F2;"></div>
<div class="a" style="left:545.80px;top:409.92px;width:247.10px;height:1.00px;background:#E6E6E6;"></div>
<div class="a" style="left:545.80px;top:428.74px;width:60.70px;height:18.32px;background:#D9D9D9;"></div>
<div class="a" style="left:606.50px;top:428.74px;width:63.60px;height:18.32px;background:#F2F2F2;"></div>
<div class="a" style="left:670.10px;top:428.74px;width:61.50px;height:18.32px;background:#FFFFFF;"></div>
<div class="a" style="left:731.60px;top:428.74px;width:61.30px;height:18.32px;background:#F2F2F2;"></div>
<div class="a" style="left:545.80px;top:428.24px;width:247.10px;height:1.00px;background:#E6E6E6;"></div>
<div class="a" style="left:545.80px;top:447.06px;width:60.70px;height:18.32px;background:#D9D9D9;"></div>
<div class="a" style="left:606.50px;top:447.06px;width:63.60px;height:18.32px;background:#F2F2F2;"></div>
<div class="a" style="left:670.10px;top:447.06px;width:61.50px;height:18.32px;background:#FFFFFF;"></div>
<div class="a" style="left:731.60px;top:447.06px;width:61.30px;height:18.32px;background:#F2F2F2;"></div>
<div class="a" style="left:545.80px;top:446.56px;width:247.10px;height:1.00px;background:#E6E6E6;"></div>
<div class="a" style="left:545.80px;top:465.38px;width:60.70px;height:18.32px;background:#D9D9D9;"></div>
<div class="a" style="left:606.50px;top:465.38px;width:63.60px;height:18.32px;background:#F2F2F2;"></div>
<div class="a" style="left:670.10px;top:465.38px;width:61.50px;height:18.32px;background:#FFFFFF;"></div>
<div class="a" style="left:731.60px;top:465.38px;width:61.30px;height:18.32px;background:#F2F2F2;"></div>
<div class="a" style="left:545.80px;top:464.88px;width:247.10px;height:1.00px;background:#E6E6E6;"></div>
<div class="a" style="left:545.80px;top:483.70px;width:60.70px;height:18.32px;background:#D9D9D9;"></div>
<div class="a" style="left:606.50px;top:483.70px;width:63.60px;height:18.32px;background:#F2F2F2;"></div>
<div class="a" style="left:670.10px;top:483.70px;width:61.50px;height:18.32px;background:#FFFFFF;"></div>
<div class="a" style="left:731.60px;top:483.70px;width:61.30px;height:18.32px;background:#F2F2F2;"></div>
<div class="a" style="left:545.80px;top:483.20px;width:247.10px;height:1.00px;background:#E6E6E6;"></div>
<div class="a" style="left:545.80px;top:502.02px;width:60.70px;height:18.32px;background:#D9D9D9;"></div>
<div class="a" style="left:606.50px;top:502.02px;width:63.60px;height:18.32px;background:#F2F2F2;"></div>
<div class="a" style="left:670.10px;top:502.02px;width:61.50px;height:18.32px;background:#FFFFFF;"></div>
<div class="a" style="left:731.60px;top:502.02px;width:61.30px;height:18.32px;background:#F2F2F2;"></div>
<div class="a" style="left:545.80px;top:501.52px;width:247.10px;height:1.00px;background:#E6E6E6;"></div>
<div class="a" style="left:545.80px;top:520.34px;width:60.70px;height:18.32px;background:#D9D9D9;"></div>
<div class="a" style="left:606.50px;top:520.34px;width:63.60px;height:18.32px;background:#F2F2F2;"></div>
<div class="a" style="left:670.10px;top:520.34px;width:61.50px;height:18.32px;background:#FFFFFF;"></div>
<div class="a" style="left:731.60px;top:520.34px;width:61.30px;height:18.32px;background:#F2F2F2;"></div>
<div class="a" style="left:545.80px;top:519.84px;width:247.10px;height:1.00px;background:#E6E6E6;"></div>
<div class="a" style="left:798.70px;top:241.80px;width:124.30px;height:23.20px;background:#D9D9D9;"></div>
<div class="a" style="left:923.00px;top:241.80px;width:123.50px;height:23.20px;background:#F0482C;"></div>
<div class="a" style="left:798.70px;top:273.90px;width:247.80px;height:26.60px;background:#D9D9D9;"></div>
<div class="a" style="left:858.60px;top:273.90px;width:1.00px;height:26.60px;background:#E9E9E9;"></div>
<div class="a" style="left:922.50px;top:273.90px;width:1.00px;height:26.60px;background:#E9E9E9;"></div>
<div class="a" style="left:984.20px;top:273.90px;width:1.00px;height:26.60px;background:#E9E9E9;"></div>
<div class="a" style="left:798.70px;top:300.50px;width:60.40px;height:18.32px;background:#D9D9D9;"></div>
<div class="a" style="left:859.10px;top:300.50px;width:63.90px;height:18.32px;background:#F2F2F2;"></div>
<div class="a" style="left:923.00px;top:300.50px;width:61.70px;height:18.32px;background:#FFFFFF;"></div>
<div class="a" style="left:984.70px;top:300.50px;width:61.80px;height:18.32px;background:#F2F2F2;"></div>
<div class="a" style="left:798.70px;top:300.00px;width:247.80px;height:1.00px;background:#E6E6E6;"></div>
<div class="a" style="left:798.70px;top:318.82px;width:60.40px;height:18.32px;background:#D9D9D9;"></div>
<div class="a" style="left:859.10px;top:318.82px;width:63.90px;height:18.32px;background:#F2F2F2;"></div>
<div class="a" style="left:923.00px;top:318.82px;width:61.70px;height:18.32px;background:#FFFFFF;"></div>
<div class="a" style="left:984.70px;top:318.82px;width:61.80px;height:18.32px;background:#F2F2F2;"></div>
<div class="a" style="left:798.70px;top:318.32px;width:247.80px;height:1.00px;background:#E6E6E6;"></div>
<div class="a" style="left:798.70px;top:337.14px;width:60.40px;height:18.32px;background:#D9D9D9;"></div>
<div class="a" style="left:859.10px;top:337.14px;width:63.90px;height:18.32px;background:#F2F2F2;"></div>
<div class="a" style="left:923.00px;top:337.14px;width:61.70px;height:18.32px;background:#FFFFFF;"></div>
<div class="a" style="left:984.70px;top:337.14px;width:61.80px;height:18.32px;background:#F2F2F2;"></div>
<div class="a" style="left:798.70px;top:336.64px;width:247.80px;height:1.00px;background:#E6E6E6;"></div>
<div class="a" style="left:798.70px;top:355.46px;width:60.40px;height:18.32px;background:#D9D9D9;"></div>
<div class="a" style="left:859.10px;top:355.46px;width:63.90px;height:18.32px;background:#F2F2F2;"></div>
<div class="a" style="left:923.00px;top:355.46px;width:61.70px;height:18.32px;background:#FFFFFF;"></div>
<div class="a" style="left:984.70px;top:355.46px;width:61.80px;height:18.32px;background:#F2F2F2;"></div>
<div class="a" style="left:798.70px;top:354.96px;width:247.80px;height:1.00px;background:#E6E6E6;"></div>
<div class="a" style="left:798.70px;top:373.78px;width:60.40px;height:18.32px;background:#D9D9D9;"></div>
<div class="a" style="left:859.10px;top:373.78px;width:63.90px;height:18.32px;background:#F2F2F2;"></div>
<div class="a" style="left:923.00px;top:373.78px;width:61.70px;height:18.32px;background:#FFFFFF;"></div>
<div class="a" style="left:984.70px;top:373.78px;width:61.80px;height:18.32px;background:#F2F2F2;"></div>
<div class="a" style="left:798.70px;top:373.28px;width:247.80px;height:1.00px;background:#E6E6E6;"></div>
<div class="a" style="left:798.70px;top:392.10px;width:60.40px;height:18.32px;background:#D9D9D9;"></div>
<div class="a" style="left:859.10px;top:392.10px;width:63.90px;height:18.32px;background:#F2F2F2;"></div>
<div class="a" style="left:923.00px;top:392.10px;width:61.70px;height:18.32px;background:#FFFFFF;"></div>
<div class="a" style="left:984.70px;top:392.10px;width:61.80px;height:18.32px;background:#F2F2F2;"></div>
<div class="a" style="left:798.70px;top:391.60px;width:247.80px;height:1.00px;background:#E6E6E6;"></div>
<div class="a" style="left:798.70px;top:410.42px;width:60.40px;height:18.32px;background:#D9D9D9;"></div>
<div class="a" style="left:859.10px;top:410.42px;width:63.90px;height:18.32px;background:#F2F2F2;"></div>
<div class="a" style="left:923.00px;top:410.42px;width:61.70px;height:18.32px;background:#FFFFFF;"></div>
<div class="a" style="left:984.70px;top:410.42px;width:61.80px;height:18.32px;background:#F2F2F2;"></div>
<div class="a" style="left:798.70px;top:409.92px;width:247.80px;height:1.00px;background:#E6E6E6;"></div>
<div class="a" style="left:798.70px;top:428.74px;width:60.40px;height:18.32px;background:#D9D9D9;"></div>
<div class="a" style="left:859.10px;top:428.74px;width:63.90px;height:18.32px;background:#F2F2F2;"></div>
<div class="a" style="left:923.00px;top:428.74px;width:61.70px;height:18.32px;background:#FFFFFF;"></div>
<div class="a" style="left:984.70px;top:428.74px;width:61.80px;height:18.32px;background:#F2F2F2;"></div>
<div class="a" style="left:798.70px;top:428.24px;width:247.80px;height:1.00px;background:#E6E6E6;"></div>
<div class="a" style="left:798.70px;top:447.06px;width:60.40px;height:18.32px;background:#D9D9D9;"></div>
<div class="a" style="left:859.10px;top:447.06px;width:63.90px;height:18.32px;background:#F2F2F2;"></div>
<div class="a" style="left:923.00px;top:447.06px;width:61.70px;height:18.32px;background:#FFFFFF;"></div>
<div class="a" style="left:984.70px;top:447.06px;width:61.80px;height:18.32px;background:#F2F2F2;"></div>
<div class="a" style="left:798.70px;top:446.56px;width:247.80px;height:1.00px;background:#E6E6E6;"></div>
<div class="a" style="left:798.70px;top:465.38px;width:60.40px;height:18.32px;background:#D9D9D9;"></div>
<div class="a" style="left:859.10px;top:465.38px;width:63.90px;height:18.32px;background:#F2F2F2;"></div>
<div class="a" style="left:923.00px;top:465.38px;width:61.70px;height:18.32px;background:#FFFFFF;"></div>
<div class="a" style="left:984.70px;top:465.38px;width:61.80px;height:18.32px;background:#F2F2F2;"></div>
<div class="a" style="left:798.70px;top:464.88px;width:247.80px;height:1.00px;background:#E6E6E6;"></div>
<div class="a" style="left:798.70px;top:483.70px;width:60.40px;height:18.32px;background:#D9D9D9;"></div>
<div class="a" style="left:859.10px;top:483.70px;width:63.90px;height:18.32px;background:#F2F2F2;"></div>
<div class="a" style="left:923.00px;top:483.70px;width:61.70px;height:18.32px;background:#FFFFFF;"></div>
<div class="a" style="left:984.70px;top:483.70px;width:61.80px;height:18.32px;background:#F2F2F2;"></div>
<div class="a" style="left:798.70px;top:483.20px;width:247.80px;height:1.00px;background:#E6E6E6;"></div>
<div class="a" style="left:798.70px;top:502.02px;width:60.40px;height:18.32px;background:#D9D9D9;"></div>
<div class="a" style="left:859.10px;top:502.02px;width:63.90px;height:18.32px;background:#F2F2F2;"></div>
<div class="a" style="left:923.00px;top:502.02px;width:61.70px;height:18.32px;background:#FFFFFF;"></div>
<div class="a" style="left:984.70px;top:502.02px;width:61.80px;height:18.32px;background:#F2F2F2;"></div>
<div class="a" style="left:798.70px;top:501.52px;width:247.80px;height:1.00px;background:#E6E6E6;"></div>
<div class="a" style="left:798.70px;top:520.34px;width:60.40px;height:18.32px;background:#D9D9D9;"></div>
<div class="a" style="left:859.10px;top:520.34px;width:63.90px;height:18.32px;background:#F2F2F2;"></div>
<div class="a" style="left:923.00px;top:520.34px;width:61.70px;height:18.32px;background:#FFFFFF;"></div>
<div class="a" style="left:984.70px;top:520.34px;width:61.80px;height:18.32px;background:#F2F2F2;"></div>
<div class="a" style="left:798.70px;top:519.84px;width:247.80px;height:1.00px;background:#E6E6E6;"></div>
<div class="s">
<div class="a t" style="left:48.40px;top:250.00px;font-size:9.86px;color:#3A3A3A;font-weight:bold;transform:scaleX(0.9300);">Data de Início</div>
<div class="a t" style="left:172.60px;top:250.00px;font-size:9.86px;color:#222;transform:scaleX(0.9500);">10/09/2017</div>
<div class="a t" style="left:48.77px;top:284.00px;font-size:9.86px;color:#3A3A3A;font-weight:bold;transform:scaleX(0.9300);">Semana</div>
<div class="a t" style="left:108.80px;top:284.00px;font-size:9.86px;color:#3A3A3A;font-weight:bold;transform:scaleX(0.9300);">Meta</div>
<div class="a t" style="left:173.25px;top:277.00px;font-size:9.86px;color:#3A3A3A;font-weight:bold;transform:scaleX(0.9300);">Valor</div>
<div class="a t" style="left:172.70px;top:290.00px;font-size:9.86px;color:#3A3A3A;font-weight:bold;transform:scaleX(0.9300);">Poupado</div>
<div class="a t" style="left:234.37px;top:284.00px;font-size:9.86px;color:#3A3A3A;font-weight:bold;transform:scaleX(0.9300);">Saldo</div>
<div class="a t" style="left:48.27px;top:306.00px;font-size:9.71px;color:#262626;">1 - 10/9</div>
<div class="a t" style="left:114.14px;top:306.00px;font-size:9.71px;color:#262626;transform:scaleX(0.9100);">R$ 192,3</div>
<div class="a t" style="left:176.71px;top:306.00px;font-size:9.71px;color:#F2FFEE;transform:scaleX(0.9100);">R$ 200,0</div>
<div class="a t" style="left:238.31px;top:306.00px;font-size:9.71px;color:#262626;transform:scaleX(0.9100);">R$ 200,0</div>
<div class="a t" style="left:48.51px;top:324.00px;font-size:9.71px;color:#262626;">2 - 17/9</div>
<div class="a t" style="left:114.14px;top:324.00px;font-size:9.71px;color:#262626;transform:scaleX(0.9100);">R$ 192,3</div>
<div class="a t" style="left:176.71px;top:324.00px;font-size:9.71px;color:#FFF0EA;transform:scaleX(0.9100);">R$ 180,0</div>
<div class="a t" style="left:238.31px;top:324.00px;font-size:9.71px;color:#262626;transform:scaleX(0.9100);">R$ 380,0</div>
<div class="a t" style="left:48.66px;top:343.00px;font-size:9.71px;color:#262626;">3 - 24/9</div>
<div class="a t" style="left:114.14px;top:343.00px;font-size:9.71px;color:#262626;transform:scaleX(0.9100);">R$ 192,3</div>
<div class="a t" style="left:176.71px;top:343.00px;font-size:9.71px;color:#FFF0EA;transform:scaleX(0.9100);">R$ 190,0</div>
<div class="a t" style="left:238.31px;top:343.00px;font-size:9.71px;color:#262626;transform:scaleX(0.9100);">R$ 570,0</div>
<div class="a t" style="left:48.81px;top:361.00px;font-size:9.71px;color:#262626;">4 - 1/10</div>
<div class="a t" style="left:114.14px;top:361.00px;font-size:9.71px;color:#262626;transform:scaleX(0.9100);">R$ 192,3</div>
<div class="a t" style="left:176.71px;top:361.00px;font-size:9.71px;color:#F2FFEE;transform:scaleX(0.9100);">R$ 200,0</div>
<div class="a t" style="left:238.31px;top:361.00px;font-size:9.71px;color:#262626;transform:scaleX(0.9100);">R$ 770,0</div>
<div class="a t" style="left:48.61px;top:379.00px;font-size:9.71px;color:#262626;">5 - 8/10</div>
<div class="a t" style="left:114.14px;top:379.00px;font-size:9.71px;color:#262626;transform:scaleX(0.9100);">R$ 192,3</div>
<div class="a t" style="left:176.71px;top:379.00px;font-size:9.71px;color:#FFF0EA;transform:scaleX(0.9100);">R$ 150,0</div>
<div class="a t" style="left:238.31px;top:379.00px;font-size:9.71px;color:#262626;transform:scaleX(0.9100);">R$ 920,0</div>
<div class="a t" style="left:48.51px;top:398.00px;font-size:9.71px;color:#262626;">6 - 15/10</div>
<div class="a t" style="left:114.14px;top:398.00px;font-size:9.71px;color:#262626;transform:scaleX(0.9100);">R$ 192,3</div>
<div class="a t" style="left:176.71px;top:398.00px;font-size:9.71px;color:#F2FFEE;transform:scaleX(0.9100);">R$ 200,0</div>
<div class="a t" style="left:234.65px;top:398.00px;font-size:9.71px;color:#262626;transform:scaleX(0.9100);">R$ 1.120,0</div>
<div class="a t" style="left:48.51px;top:416.00px;font-size:9.71px;color:#262626;">7 - 22/10</div>
<div class="a t" style="left:114.14px;top:416.00px;font-size:9.71px;color:#262626;transform:scaleX(0.9100);">R$ 192,3</div>
<div class="a t" style="left:176.71px;top:416.00px;font-size:9.71px;color:#F2FFEE;transform:scaleX(0.9100);">R$ 200,0</div>
<div class="a t" style="left:234.65px;top:416.00px;font-size:9.71px;color:#262626;transform:scaleX(0.9100);">R$ 1.320,0</div>
<div class="a t" style="left:48.61px;top:434.00px;font-size:9.71px;color:#262626;">8 - 29/10</div>
<div class="a t" style="left:114.14px;top:434.00px;font-size:9.71px;color:#262626;transform:scaleX(0.9100);">R$ 192,3</div>
<div class="a t" style="left:176.71px;top:434.00px;font-size:9.71px;color:#F2FFEE;transform:scaleX(0.9100);">R$ 200,0</div>
<div class="a t" style="left:234.65px;top:434.00px;font-size:9.71px;color:#262626;transform:scaleX(0.9100);">R$ 1.520,0</div>
<div class="a t" style="left:48.56px;top:453.00px;font-size:9.71px;color:#262626;">9 - 5/11</div>
<div class="a t" style="left:114.14px;top:453.00px;font-size:9.71px;color:#262626;transform:scaleX(0.9100);">R$ 192,3</div>
<div class="a t" style="left:176.71px;top:453.00px;font-size:9.71px;color:#F2FFEE;transform:scaleX(0.9100);">R$ 200,0</div>
<div class="a t" style="left:234.65px;top:453.00px;font-size:9.71px;color:#262626;transform:scaleX(0.9100);">R$ 1.720,0</div>
<div class="a t" style="left:48.27px;top:471.00px;font-size:9.71px;color:#262626;">10 - 12/11</div>
<div class="a t" style="left:114.14px;top:471.00px;font-size:9.71px;color:#262626;transform:scaleX(0.9100);">R$ 192,3</div>
<div class="a t" style="left:176.71px;top:471.00px;font-size:9.71px;color:#FFF0EA;transform:scaleX(0.9100);">R$ 100,0</div>
<div class="a t" style="left:234.65px;top:471.00px;font-size:9.71px;color:#262626;transform:scaleX(0.9100);">R$ 1.820,0</div>
<div class="a t" style="left:48.27px;top:489.00px;font-size:9.71px;color:#262626;">11 - 19/11</div>
<div class="a t" style="left:114.14px;top:489.00px;font-size:9.71px;color:#262626;transform:scaleX(0.9100);">R$ 192,3</div>
<div class="a t" style="left:181.64px;top:489.00px;font-size:9.71px;color:#FFF0EA;transform:scaleX(0.9100);">R$ 0,0</div>
<div class="a t" style="left:234.65px;top:489.00px;font-size:9.71px;color:#262626;transform:scaleX(0.9100);">R$ 1.820,0</div>
<div class="a t" style="left:48.27px;top:508.00px;font-size:9.71px;color:#262626;">12 - 26/11</div>
<div class="a t" style="left:114.14px;top:508.00px;font-size:9.71px;color:#262626;transform:scaleX(0.9100);">R$ 192,3</div>
<div class="a t" style="left:176.71px;top:508.00px;font-size:9.71px;color:#FFF0EA;transform:scaleX(0.9100);">R$ 100,0</div>
<div class="a t" style="left:234.65px;top:508.00px;font-size:9.71px;color:#262626;transform:scaleX(0.9100);">R$ 1.920,0</div>
<div class="a t" style="left:48.27px;top:526.00px;font-size:9.71px;color:#262626;">13 - 3/12</div>
<div class="a t" style="left:114.14px;top:526.00px;font-size:9.71px;color:#262626;transform:scaleX(0.9100);">R$ 192,3</div>
<div class="a t" style="left:176.71px;top:526.00px;font-size:9.71px;color:#FFF0EA;transform:scaleX(0.9100);">R$ 180,0</div>
<div class="a t" style="left:234.65px;top:526.00px;font-size:9.71px;color:#262626;transform:scaleX(0.9100);">R$ 2.100,0</div>
<div class="a t" style="left:301.00px;top:250.00px;font-size:9.86px;color:#3A3A3A;font-weight:bold;transform:scaleX(0.9300);">Meta de Economia no ano</div>
<div class="a t" style="left:425.35px;top:250.00px;font-size:9.86px;color:#222;transform:scaleX(0.9500);">R$ 10.000</div>
<div class="a t" style="left:301.37px;top:284.00px;font-size:9.86px;color:#3A3A3A;font-weight:bold;transform:scaleX(0.9300);">Semana</div>
<div class="a t" style="left:362.00px;top:284.00px;font-size:9.86px;color:#3A3A3A;font-weight:bold;transform:scaleX(0.9300);">Meta</div>
<div class="a t" style="left:426.05px;top:277.00px;font-size:9.86px;color:#3A3A3A;font-weight:bold;transform:scaleX(0.9300);">Valor</div>
<div class="a t" style="left:425.50px;top:290.00px;font-size:9.86px;color:#3A3A3A;font-weight:bold;transform:scaleX(0.9300);">Poupado</div>
<div class="a t" style="left:487.47px;top:284.00px;font-size:9.86px;color:#3A3A3A;font-weight:bold;transform:scaleX(0.9300);">Saldo</div>
<div class="a t" style="left:300.87px;top:306.00px;font-size:9.71px;color:#262626;">14 - 10/12</div>
<div class="a t" style="left:367.14px;top:306.00px;font-size:9.71px;color:#262626;transform:scaleX(0.9100);">R$ 192,3</div>
<div class="a t" style="left:429.66px;top:306.00px;font-size:9.71px;color:#F2FFEE;transform:scaleX(0.9100);">R$ 300,0</div>
<div class="a t" style="left:487.60px;top:306.00px;font-size:9.71px;color:#262626;transform:scaleX(0.9100);">R$ 2.400,0</div>
<div class="a t" style="left:300.87px;top:324.00px;font-size:9.71px;color:#262626;">15 - 17/12</div>
<div class="a t" style="left:367.14px;top:324.00px;font-size:9.71px;color:#262626;transform:scaleX(0.9100);">R$ 192,3</div>
<div class="a t" style="left:429.66px;top:324.00px;font-size:9.71px;color:#F2FFEE;transform:scaleX(0.9100);">R$ 200,0</div>
<div class="a t" style="left:487.60px;top:324.00px;font-size:9.71px;color:#262626;transform:scaleX(0.9100);">R$ 2.600,0</div>
<div class="a t" style="left:300.87px;top:343.00px;font-size:9.71px;color:#262626;">16 - 24/12</div>
<div class="a t" style="left:367.14px;top:343.00px;font-size:9.71px;color:#262626;transform:scaleX(0.9100);">R$ 192,3</div>
<div class="a t" style="left:429.66px;top:343.00px;font-size:9.71px;color:#FFF0EA;transform:scaleX(0.9100);">R$ 100,0</div>
<div class="a t" style="left:487.60px;top:343.00px;font-size:9.71px;color:#262626;transform:scaleX(0.9100);">R$ 2.700,0</div>
<div class="a t" style="left:300.87px;top:361.00px;font-size:9.71px;color:#262626;">17 - 31/12</div>
<div class="a t" style="left:367.14px;top:361.00px;font-size:9.71px;color:#262626;transform:scaleX(0.9100);">R$ 192,3</div>
<div class="a t" style="left:429.66px;top:361.00px;font-size:9.71px;color:#F2FFEE;transform:scaleX(0.9100);">R$ 300,0</div>
<div class="a t" style="left:487.60px;top:361.00px;font-size:9.71px;color:#262626;transform:scaleX(0.9100);">R$ 3.000,0</div>
<div class="a t" style="left:300.87px;top:379.00px;font-size:9.71px;color:#262626;">18 - 7/1</div>
<div class="a t" style="left:367.14px;top:379.00px;font-size:9.71px;color:#262626;transform:scaleX(0.9100);">R$ 192,3</div>
<div class="a t" style="left:429.66px;top:379.00px;font-size:9.71px;color:#F2FFEE;transform:scaleX(0.9100);">R$ 200,0</div>
<div class="a t" style="left:487.60px;top:379.00px;font-size:9.71px;color:#262626;transform:scaleX(0.9100);">R$ 3.200,0</div>
<div class="a t" style="left:300.87px;top:398.00px;font-size:9.71px;color:#262626;">19 - 14/1</div>
<div class="a t" style="left:367.14px;top:398.00px;font-size:9.71px;color:#262626;transform:scaleX(0.9100);">R$ 192,3</div>
<div class="a t" style="left:429.66px;top:398.00px;font-size:9.71px;color:#F2FFEE;transform:scaleX(0.9100);">R$ 350,0</div>
<div class="a t" style="left:487.60px;top:398.00px;font-size:9.71px;color:#262626;transform:scaleX(0.9100);">R$ 3.550,0</div>
<div class="a t" style="left:301.11px;top:416.00px;font-size:9.71px;color:#262626;">20 - 21/1</div>
<div class="a t" style="left:367.14px;top:416.00px;font-size:9.71px;color:#262626;transform:scaleX(0.9100);">R$ 192,3</div>
<div class="a t" style="left:429.66px;top:416.00px;font-size:9.71px;color:#F2FFEE;transform:scaleX(0.9100);">R$ 200,0</div>
<div class="a t" style="left:487.60px;top:416.00px;font-size:9.71px;color:#262626;transform:scaleX(0.9100);">R$ 3.750,0</div>
<div class="a t" style="left:301.11px;top:434.00px;font-size:9.71px;color:#262626;">21 - 28/1</div>
<div class="a t" style="left:367.14px;top:434.00px;font-size:9.71px;color:#262626;transform:scaleX(0.9100);">R$ 192,3</div>
<div class="a t" style="left:429.66px;top:434.00px;font-size:9.71px;color:#FFF0EA;transform:scaleX(0.9100);">R$ 100,0</div>
<div class="a t" style="left:487.60px;top:434.00px;font-size:9.71px;color:#262626;transform:scaleX(0.9100);">R$ 3.850,0</div>
<div class="a t" style="left:301.11px;top:453.00px;font-size:9.71px;color:#262626;">22 - 4/2</div>
<div class="a t" style="left:367.14px;top:453.00px;font-size:9.71px;color:#262626;transform:scaleX(0.9100);">R$ 192,3</div>
<div class="a t" style="left:429.66px;top:453.00px;font-size:9.71px;color:#F2FFEE;transform:scaleX(0.9100);">R$ 280,0</div>
<div class="a t" style="left:487.60px;top:453.00px;font-size:9.71px;color:#262626;transform:scaleX(0.9100);">R$ 4.130,0</div>
<div class="a t" style="left:301.11px;top:471.00px;font-size:9.71px;color:#262626;">23 - 11/2</div>
<div class="a t" style="left:367.14px;top:471.00px;font-size:9.71px;color:#262626;transform:scaleX(0.9100);">R$ 192,3</div>
<div class="a t" style="left:429.66px;top:471.00px;font-size:9.71px;color:#F2FFEE;transform:scaleX(0.9100);">R$ 200,0</div>
<div class="a t" style="left:487.60px;top:471.00px;font-size:9.71px;color:#262626;transform:scaleX(0.9100);">R$ 4.330,0</div>
<div class="a t" style="left:301.11px;top:489.00px;font-size:9.71px;color:#262626;">24 - 18/2</div>
<div class="a t" style="left:367.14px;top:489.00px;font-size:9.71px;color:#262626;transform:scaleX(0.9100);">R$ 192,3</div>
<div class="a t" style="left:429.66px;top:489.00px;font-size:9.71px;color:#F2FFEE;transform:scaleX(0.9100);">R$ 200,0</div>
<div class="a t" style="left:487.60px;top:489.00px;font-size:9.71px;color:#262626;transform:scaleX(0.9100);">R$ 4.530,0</div>
<div class="a t" style="left:301.11px;top:508.00px;font-size:9.71px;color:#262626;">25 - 25/2</div>
<div class="a t" style="left:367.14px;top:508.00px;font-size:9.71px;color:#262626;transform:scaleX(0.9100);">R$ 192,3</div>
<div class="a t" style="left:429.66px;top:508.00px;font-size:9.71px;color:#F2FFEE;transform:scaleX(0.9100);">R$ 200,0</div>
<div class="a t" style="left:487.60px;top:508.00px;font-size:9.71px;color:#262626;transform:scaleX(0.9100);">R$ 4.730,0</div>
<div class="a t" style="left:301.11px;top:526.00px;font-size:9.71px;color:#262626;">26 - 4/3</div>
<div class="a t" style="left:367.14px;top:526.00px;font-size:9.71px;color:#262626;transform:scaleX(0.9100);">R$ 192,3</div>
<div class="a t" style="left:429.66px;top:526.00px;font-size:9.71px;color:#F2FFEE;transform:scaleX(0.9100);">R$ 200,0</div>
<div class="a t" style="left:487.60px;top:526.00px;font-size:9.71px;color:#262626;transform:scaleX(0.9100);">R$ 4.930,0</div>
<div class="a t" style="left:554.85px;top:250.00px;font-size:9.86px;color:#3A3A3A;font-weight:bold;transform:scaleX(0.9300);">Valor Poupado</div>
<div class="a t" style="left:678.45px;top:250.00px;font-size:9.86px;color:#222;transform:scaleX(0.9500);">R$ 4.930</div>
<div class="a t" style="left:554.67px;top:284.00px;font-size:9.86px;color:#3A3A3A;font-weight:bold;transform:scaleX(0.9300);">Semana</div>
<div class="a t" style="left:615.00px;top:284.00px;font-size:9.86px;color:#3A3A3A;font-weight:bold;transform:scaleX(0.9300);">Meta</div>
<div class="a t" style="left:679.15px;top:277.00px;font-size:9.86px;color:#3A3A3A;font-weight:bold;transform:scaleX(0.9300);">Valor</div>
<div class="a t" style="left:678.60px;top:290.00px;font-size:9.86px;color:#3A3A3A;font-weight:bold;transform:scaleX(0.9300);">Poupado</div>
<div class="a t" style="left:740.47px;top:284.00px;font-size:9.86px;color:#3A3A3A;font-weight:bold;transform:scaleX(0.9300);">Saldo</div>
<div class="a t" style="left:554.41px;top:306.00px;font-size:9.71px;color:#262626;">27 - 11/3</div>
<div class="a t" style="left:620.19px;top:306.00px;font-size:9.71px;color:#262626;transform:scaleX(0.9100);">R$ 192,3</div>
<div class="a t" style="left:740.45px;top:306.00px;font-size:9.71px;color:#262626;transform:scaleX(0.9100);">R$ 4.930,0</div>
<div class="a t" style="left:554.41px;top:324.00px;font-size:9.71px;color:#262626;">28 - 18/3</div>
<div class="a t" style="left:620.19px;top:324.00px;font-size:9.71px;color:#262626;transform:scaleX(0.9100);">R$ 192,3</div>
<div class="a t" style="left:740.45px;top:324.00px;font-size:9.71px;color:#262626;transform:scaleX(0.9100);">R$ 4.930,0</div>
<div class="a t" style="left:554.41px;top:343.00px;font-size:9.71px;color:#262626;">29 - 25/3</div>
<div class="a t" style="left:620.19px;top:343.00px;font-size:9.71px;color:#262626;transform:scaleX(0.9100);">R$ 192,3</div>
<div class="a t" style="left:740.45px;top:343.00px;font-size:9.71px;color:#262626;transform:scaleX(0.9100);">R$ 4.930,0</div>
<div class="a t" style="left:554.56px;top:361.00px;font-size:9.71px;color:#262626;">30 - 1/4</div>
<div class="a t" style="left:620.19px;top:361.00px;font-size:9.71px;color:#262626;transform:scaleX(0.9100);">R$ 192,3</div>
<div class="a t" style="left:740.45px;top:361.00px;font-size:9.71px;color:#262626;transform:scaleX(0.9100);">R$ 4.930,0</div>
<div class="a t" style="left:554.56px;top:379.00px;font-size:9.71px;color:#262626;">31 - 8/4</div>
<div class="a t" style="left:620.19px;top:379.00px;font-size:9.71px;color:#262626;transform:scaleX(0.9100);">R$ 192,3</div>
<div class="a t" style="left:740.45px;top:379.00px;font-size:9.71px;color:#262626;transform:scaleX(0.9100);">R$ 4.930,0</div>
<div class="a t" style="left:554.56px;top:398.00px;font-size:9.71px;color:#262626;">32 - 15/4</div>
<div class="a t" style="left:620.19px;top:398.00px;font-size:9.71px;color:#262626;transform:scaleX(0.9100);">R$ 192,3</div>
<div class="a t" style="left:740.45px;top:398.00px;font-size:9.71px;color:#262626;transform:scaleX(0.9100);">R$ 4.930,0</div>
<div class="a t" style="left:554.56px;top:416.00px;font-size:9.71px;color:#262626;">33 - 22/4</div>
<div class="a t" style="left:620.19px;top:416.00px;font-size:9.71px;color:#262626;transform:scaleX(0.9100);">R$ 192,3</div>
<div class="a t" style="left:740.45px;top:416.00px;font-size:9.71px;color:#262626;transform:scaleX(0.9100);">R$ 4.930,0</div>
<div class="a t" style="left:554.56px;top:434.00px;font-size:9.71px;color:#262626;">34 - 29/4</div>
<div class="a t" style="left:620.19px;top:434.00px;font-size:9.71px;color:#262626;transform:scaleX(0.9100);">R$ 192,3</div>
<div class="a t" style="left:740.45px;top:434.00px;font-size:9.71px;color:#262626;transform:scaleX(0.9100);">R$ 4.930,0</div>
<div class="a t" style="left:554.56px;top:453.00px;font-size:9.71px;color:#262626;">35 - 6/5</div>
<div class="a t" style="left:620.19px;top:453.00px;font-size:9.71px;color:#262626;transform:scaleX(0.9100);">R$ 192,3</div>
<div class="a t" style="left:740.45px;top:453.00px;font-size:9.71px;color:#262626;transform:scaleX(0.9100);">R$ 4.930,0</div>
<div class="a t" style="left:554.56px;top:471.00px;font-size:9.71px;color:#262626;">36 - 13/5</div>
<div class="a t" style="left:620.19px;top:471.00px;font-size:9.71px;color:#262626;transform:scaleX(0.9100);">R$ 192,3</div>
<div class="a t" style="left:740.45px;top:471.00px;font-size:9.71px;color:#262626;transform:scaleX(0.9100);">R$ 4.930,0</div>
<div class="a t" style="left:554.56px;top:489.00px;font-size:9.71px;color:#262626;">37 - 20/5</div>
<div class="a t" style="left:620.19px;top:489.00px;font-size:9.71px;color:#262626;transform:scaleX(0.9100);">R$ 192,3</div>
<div class="a t" style="left:740.45px;top:489.00px;font-size:9.71px;color:#262626;transform:scaleX(0.9100);">R$ 4.930,0</div>
<div class="a t" style="left:554.56px;top:508.00px;font-size:9.71px;color:#262626;">38 - 27/5</div>
<div class="a t" style="left:620.19px;top:508.00px;font-size:9.71px;color:#262626;transform:scaleX(0.9100);">R$ 192,3</div>
<div class="a t" style="left:740.45px;top:508.00px;font-size:9.71px;color:#262626;transform:scaleX(0.9100);">R$ 4.930,0</div>
<div class="a t" style="left:554.56px;top:526.00px;font-size:9.71px;color:#262626;">39 - 3/6</div>
<div class="a t" style="left:620.19px;top:526.00px;font-size:9.71px;color:#262626;transform:scaleX(0.9100);">R$ 192,3</div>
<div class="a t" style="left:740.45px;top:526.00px;font-size:9.71px;color:#262626;transform:scaleX(0.9100);">R$ 4.930,0</div>
<div class="a t" style="left:807.20px;top:250.00px;font-size:9.86px;color:#3A3A3A;font-weight:bold;transform:scaleX(0.9300);">Economizou mais / menos</div>
<div class="a t" style="left:931.73px;top:250.00px;font-size:9.86px;color:#FFF1EC;transform:scaleX(0.9500);">-R$ 5.070</div>
<div class="a t" style="left:807.57px;top:284.00px;font-size:9.86px;color:#3A3A3A;font-weight:bold;transform:scaleX(0.9300);">Semana</div>
<div class="a t" style="left:867.60px;top:284.00px;font-size:9.86px;color:#3A3A3A;font-weight:bold;transform:scaleX(0.9300);">Meta</div>
<div class="a t" style="left:932.05px;top:277.00px;font-size:9.86px;color:#3A3A3A;font-weight:bold;transform:scaleX(0.9300);">Valor</div>
<div class="a t" style="left:931.50px;top:290.00px;font-size:9.86px;color:#3A3A3A;font-weight:bold;transform:scaleX(0.9300);">Poupado</div>
<div class="a t" style="left:993.57px;top:284.00px;font-size:9.86px;color:#3A3A3A;font-weight:bold;transform:scaleX(0.9300);">Saldo</div>
<div class="a t" style="left:807.61px;top:306.00px;font-size:9.71px;color:#262626;">40 - 10/6</div>
<div class="a t" style="left:872.94px;top:306.00px;font-size:9.71px;color:#262626;transform:scaleX(0.9100);">R$ 192,3</div>
<div class="a t" style="left:993.80px;top:306.00px;font-size:9.71px;color:#262626;transform:scaleX(0.9100);">R$ 4.930,0</div>
<div class="a t" style="left:807.61px;top:324.00px;font-size:9.71px;color:#262626;">41 - 17/6</div>
<div class="a t" style="left:872.94px;top:324.00px;font-size:9.71px;color:#262626;transform:scaleX(0.9100);">R$ 192,3</div>
<div class="a t" style="left:993.80px;top:324.00px;font-size:9.71px;color:#262626;transform:scaleX(0.9100);">R$ 4.930,0</div>
<div class="a t" style="left:807.61px;top:343.00px;font-size:9.71px;color:#262626;">42 - 24/6</div>
<div class="a t" style="left:872.94px;top:343.00px;font-size:9.71px;color:#262626;transform:scaleX(0.9100);">R$ 192,3</div>
<div class="a t" style="left:993.80px;top:343.00px;font-size:9.71px;color:#262626;transform:scaleX(0.9100);">R$ 4.930,0</div>
<div class="a t" style="left:807.61px;top:361.00px;font-size:9.71px;color:#262626;">43 - 1/7</div>
<div class="a t" style="left:872.94px;top:361.00px;font-size:9.71px;color:#262626;transform:scaleX(0.9100);">R$ 192,3</div>
<div class="a t" style="left:993.80px;top:361.00px;font-size:9.71px;color:#262626;transform:scaleX(0.9100);">R$ 4.930,0</div>
<div class="a t" style="left:807.61px;top:379.00px;font-size:9.71px;color:#262626;">44 - 8/7</div>
<div class="a t" style="left:872.94px;top:379.00px;font-size:9.71px;color:#262626;transform:scaleX(0.9100);">R$ 192,3</div>
<div class="a t" style="left:993.80px;top:379.00px;font-size:9.71px;color:#262626;transform:scaleX(0.9100);">R$ 4.930,0</div>
<div class="a t" style="left:807.61px;top:398.00px;font-size:9.71px;color:#262626;">45 - 15/7</div>
<div class="a t" style="left:872.94px;top:398.00px;font-size:9.71px;color:#262626;transform:scaleX(0.9100);">R$ 192,3</div>
<div class="a t" style="left:993.80px;top:398.00px;font-size:9.71px;color:#262626;transform:scaleX(0.9100);">R$ 4.930,0</div>
<div class="a t" style="left:807.61px;top:416.00px;font-size:9.71px;color:#262626;">46 - 22/7</div>
<div class="a t" style="left:872.94px;top:416.00px;font-size:9.71px;color:#262626;transform:scaleX(0.9100);">R$ 192,3</div>
<div class="a t" style="left:993.80px;top:416.00px;font-size:9.71px;color:#262626;transform:scaleX(0.9100);">R$ 4.930,0</div>
<div class="a t" style="left:807.61px;top:434.00px;font-size:9.71px;color:#262626;">47 - 29/7</div>
<div class="a t" style="left:872.94px;top:434.00px;font-size:9.71px;color:#262626;transform:scaleX(0.9100);">R$ 192,3</div>
<div class="a t" style="left:993.80px;top:434.00px;font-size:9.71px;color:#262626;transform:scaleX(0.9100);">R$ 4.930,0</div>
<div class="a t" style="left:807.61px;top:453.00px;font-size:9.71px;color:#262626;">48 - 5/8</div>
<div class="a t" style="left:872.94px;top:453.00px;font-size:9.71px;color:#262626;transform:scaleX(0.9100);">R$ 192,3</div>
<div class="a t" style="left:993.80px;top:453.00px;font-size:9.71px;color:#262626;transform:scaleX(0.9100);">R$ 4.930,0</div>
<div class="a t" style="left:807.61px;top:471.00px;font-size:9.71px;color:#262626;">49 - 12/8</div>
<div class="a t" style="left:872.94px;top:471.00px;font-size:9.71px;color:#262626;transform:scaleX(0.9100);">R$ 192,3</div>
<div class="a t" style="left:993.80px;top:471.00px;font-size:9.71px;color:#262626;transform:scaleX(0.9100);">R$ 4.930,0</div>
<div class="a t" style="left:807.41px;top:489.00px;font-size:9.71px;color:#262626;">50 - 19/8</div>
<div class="a t" style="left:872.94px;top:489.00px;font-size:9.71px;color:#262626;transform:scaleX(0.9100);">R$ 192,3</div>
<div class="a t" style="left:993.80px;top:489.00px;font-size:9.71px;color:#262626;transform:scaleX(0.9100);">R$ 4.930,0</div>
<div class="a t" style="left:807.41px;top:508.00px;font-size:9.71px;color:#262626;">51 - 26/8</div>
<div class="a t" style="left:872.94px;top:508.00px;font-size:9.71px;color:#262626;transform:scaleX(0.9100);">R$ 192,3</div>
<div class="a t" style="left:993.80px;top:508.00px;font-size:9.71px;color:#262626;transform:scaleX(0.9100);">R$ 4.930,0</div>
<div class="a t" style="left:807.41px;top:526.00px;font-size:9.71px;color:#262626;">52 - 2/9</div>
<div class="a t" style="left:872.94px;top:526.00px;font-size:9.71px;color:#262626;transform:scaleX(0.9100);">R$ 192,3</div>
<div class="a t" style="left:993.80px;top:526.00px;font-size:9.71px;color:#262626;transform:scaleX(0.9100);">R$ 4.930,0</div>
</div>
<svg style="left:0;top:0;overflow:hidden" width="1060" height="44"><g stroke="#1C663C" stroke-width="2.4" fill="none">
<path d="M711 10 H837 H862 L890 38"/><circle cx="711" cy="10" r="3"/><circle cx="837" cy="10" r="3"/>
<path d="M758 24 H830 L850 44"/><circle cx="758" cy="24" r="3"/>
<circle cx="729" cy="28" r="12"/><path d="M722 21 L734 33" stroke-width="3"/><path d="M721 28 V21 H728" stroke-width="3"/>
<circle cx="904" cy="16" r="18.5"/><path d="M893 27 L911 9" stroke-width="3"/><path d="M904 8 H912 V16" stroke-width="3"/>
<path d="M967 36 L985 17.6 H1057"/><path d="M1005 44 L1045 0" stroke-width="3"/><path d="M1016 44 L1056 0" stroke-width="3"/><path d="M560 44 L575 30 H600"/>
</g></svg>
<div class="a t" style="left:10.41px;top:8.00px;font-size:9.57px;color:#4F9069;transform:scaleX(0.8970);">Salvamento Automático</div>
<svg style="left:103px;top:5px" width="28" height="12"><rect x="0.5" y="0.5" width="26.5" height="10.5" rx="5.25" fill="none" stroke="#4F9069" stroke-width="1"/><circle cx="5.7" cy="5.7" r="2.6" fill="#4F9069"/></svg>
<svg style="left:147px;top:6px" width="11" height="10"><path d="M0.5 0.5 H8.8 L10 1.7 V9.5 H0.5 Z" fill="#F4F8F5"/><rect x="2.6" y="0.5" width="5.4" height="3.6" fill="#217346"/><rect x="2.3" y="5.6" width="6" height="3.9" fill="#217346"/><rect x="3.6" y="6.8" width="3.4" height="2.7" fill="#F4F8F5"/></svg>
<svg style="left:180px;top:5px" width="11" height="12"><path d="M2.5 5 H6 A3.2 3.2 0 0 1 6 11.4 H5" fill="none" stroke="#F4F8F5" stroke-width="1.5"/><path d="M4.6 1.8 L1.4 5 L4.6 8.2" fill="none" stroke="#F4F8F5" stroke-width="1.5"/></svg>
<svg style="left:212px;top:5px" width="11" height="12"><path d="M8.5 5 H5 A3.2 3.2 0 0 0 5 11.4 H6" fill="none" stroke="#4F9069" stroke-width="1.5"/><path d="M6.4 1.8 L9.6 5 L6.4 8.2" fill="none" stroke="#4F9069" stroke-width="1.5"/></svg>
<svg style="left:247px;top:8px" width="6" height="6"><rect x="0.8" y="0.5" width="3.6" height="0.8" fill="#F4F8F5"/><path d="M0.6 2.6 H4.6 L2.6 5 Z" fill="#F4F8F5"/></svg>
<div class="a t" style="left:432.24px;top:8.00px;font-size:9.71px;color:#F1F6F3;transform:scaleX(0.8547);">Planilha Desafio 52 Semanas 4.0 - Exemplo  -  Excel</div>
<div class="a t" style="left:879.13px;top:7.00px;font-size:9.13px;color:#F1F6F3;transform:scaleX(0.9153);">Leandro Borges</div>
<svg style="left:959.5px;top:5.5px" width="11" height="9"><rect x="0.5" y="0.5" width="9" height="7" fill="none" stroke="#E8F0EA" stroke-width="0.9"/><path d="M5 2 L2.8 4.3 H7.2 Z M4.6 4.2 V6.6 H5.4 V4.2" fill="#E8F0EA"/><rect x="1.5" y="6.2" width="7" height="0.8" fill="#E8F0EA"/></svg>
<div class="a" style="left:988.00px;top:9.00px;width:8.00px;height:0.90px;background:#E8F0EA;"></div>
<svg style="left:1015px;top:5.5px" width="9" height="9"><rect x="0.5" y="2" width="5.8" height="6" fill="none" stroke="#E8F0EA" stroke-width="0.9"/><path d="M2.3 2 V0.5 H8 V6.3 H6.3" fill="none" stroke="#E8F0EA" stroke-width="0.9"/></svg>
<svg style="left:1042.5px;top:5.5px" width="8" height="8"><path d="M0.4 0.4 L7.3 7.3 M7.3 0.4 L0.4 7.3" stroke="#E8F0EA" stroke-width="0.9"/></svg>
<div class="a" style="left:47.00px;top:22.60px;width:69.60px;height:21.40px;background:#F3F3F3;"></div>
<div class="a t" style="left:8.20px;top:30.00px;font-size:9.13px;color:#F4F8F5;transform:scaleX(0.9448);">Arquivo</div>
<div class="a t" style="left:127.41px;top:30.00px;font-size:9.13px;color:#F4F8F5;transform:scaleX(0.9622);">Inserir</div>
<div class="a t" style="left:173.13px;top:30.00px;font-size:9.13px;color:#F4F8F5;transform:scaleX(0.9211);">Desenhar</div>
<div class="a t" style="left:230.94px;top:30.00px;font-size:9.13px;color:#F4F8F5;transform:scaleX(0.9091);">Layout da Página</div>
<div class="a t" style="left:317.02px;top:30.00px;font-size:9.13px;color:#F4F8F5;transform:scaleX(0.9372);">Fórmulas</div>
<div class="a t" style="left:374.12px;top:30.00px;font-size:9.13px;color:#F4F8F5;transform:scaleX(0.9275);">Dados</div>
<div class="a t" style="left:420.06px;top:30.00px;font-size:9.13px;color:#F4F8F5;transform:scaleX(0.8756);">Revisão</div>
<div class="a t" style="left:469.92px;top:30.00px;font-size:9.13px;color:#F4F8F5;transform:scaleX(0.9271);">Exibir</div>
<div class="a t" style="left:512.41px;top:30.00px;font-size:9.13px;color:#F4F8F5;transform:scaleX(0.9471);">Desenvolvedor</div>
<div class="a t" style="left:591.33px;top:30.00px;font-size:9.13px;color:#F4F8F5;transform:scaleX(0.9149);">MSP</div>
<div class="a t" style="left:631.20px;top:30.00px;font-size:9.13px;color:#F4F8F5;transform:scaleX(0.9455);">Ajuda</div>
<div class="a t" style="left:674.74px;top:30.00px;font-size:9.13px;color:#F4F8F5;transform:scaleX(0.9066);">Power Pivot</div>
<div class="a t" style="left:57.14px;top:30.00px;font-size:9.13px;color:#217346;transform:scaleX(0.9075);">Página Inicial</div>
<svg style="left:734px;top:27px" width="13" height="12"><circle cx="7.5" cy="4.5" r="3.6" fill="none" stroke="#F4F8F5" stroke-width="1.1"/><path d="M5 7 L1 11" stroke="#F4F8F5" stroke-width="1.3"/></svg>
<div class="a t" style="left:747.62px;top:30.00px;font-size:9.42px;color:#E3EEE7;transform:scaleX(0.9043);">Diga-me o que você deseja fazer</div>
<svg style="left:991px;top:28px" width="14" height="12"><path d="M1 4 V11 H11 V8" fill="none" stroke="#F4F8F5" stroke-width="1"/><path d="M3.5 8.5 C4 5 6 4 9.5 4 V6.5 L13 3 L9.5 -0.2 V2 C6 2 3.5 4 3.5 8.5 Z" fill="none" stroke="#F4F8F5" stroke-width="0.9"/></svg>
<div class="a t" style="left:1008.27px;top:30.00px;font-size:9.42px;color:#F4F8F5;transform:scaleX(0.9096);">Compartilhar</div>
<div class="a" style="left:86.20px;top:47.00px;width:1.00px;height:69.00px;background:#E0E0E0;"></div>
<div class="a" style="left:239.50px;top:47.00px;width:1.00px;height:69.00px;background:#E0E0E0;"></div>
<div class="a" style="left:511.50px;top:47.00px;width:1.00px;height:69.00px;background:#E0E0E0;"></div>
<div class="a" style="left:636.30px;top:47.00px;width:1.00px;height:69.00px;background:#E0E0E0;"></div>
<div class="a" style="left:792.20px;top:47.00px;width:1.00px;height:69.00px;background:#E0E0E0;"></div>
<div class="a" style="left:905.50px;top:47.00px;width:1.00px;height:69.00px;background:#E0E0E0;"></div>
<div class="a" style="left:1029.00px;top:47.00px;width:1.00px;height:69.00px;background:#E0E0E0;"></div>
<div class="a t" style="left:2.20px;top:108.00px;font-size:8.55px;color:#444444;transform:scaleX(0.8398);">Área de Transferência</div>
<div class="a t" style="left:148.12px;top:108.00px;font-size:8.55px;color:#444444;transform:scaleX(0.8549);">Fonte</div>
<div class="a t" style="left:349.00px;top:108.00px;font-size:8.55px;color:#444444;transform:scaleX(0.8941);">Alinhamento</div>
<div class="a t" style="left:554.47px;top:108.00px;font-size:8.55px;color:#444444;transform:scaleX(0.9158);">Número</div>
<div class="a t" style="left:704.14px;top:108.00px;font-size:8.55px;color:#444444;transform:scaleX(0.8141);">Estilos</div>
<div class="a t" style="left:836.64px;top:108.00px;font-size:8.55px;color:#444444;transform:scaleX(0.8456);">Células</div>
<div class="a t" style="left:956.41px;top:108.00px;font-size:8.55px;color:#444444;transform:scaleX(0.8567);">Edição</div>
<svg style="left:78.5px;top:110.5px" width="5" height="5"><path d="M0.5 4 V0.5 H4" fill="none" stroke="#A0A0A0" stroke-width="0.8"/><path d="M1.8 1.8 L4.5 4.5 M4.5 2.5 V4.5 H2.5" fill="none" stroke="#A0A0A0" stroke-width="0.8"/></svg>
<svg style="left:231.5px;top:110.5px" width="5" height="5"><path d="M0.5 4 V0.5 H4" fill="none" stroke="#A0A0A0" stroke-width="0.8"/><path d="M1.8 1.8 L4.5 4.5 M4.5 2.5 V4.5 H2.5" fill="none" stroke="#A0A0A0" stroke-width="0.8"/></svg>
<svg style="left:503.5px;top:110.5px" width="5" height="5"><path d="M0.5 4 V0.5 H4" fill="none" stroke="#A0A0A0" stroke-width="0.8"/><path d="M1.8 1.8 L4.5 4.5 M4.5 2.5 V4.5 H2.5" fill="none" stroke="#A0A0A0" stroke-width="0.8"/></svg>
<svg style="left:628.5px;top:110.5px" width="5" height="5"><path d="M0.5 4 V0.5 H4" fill="none" stroke="#A0A0A0" stroke-width="0.8"/><path d="M1.8 1.8 L4.5 4.5 M4.5 2.5 V4.5 H2.5" fill="none" stroke="#A0A0A0" stroke-width="0.8"/></svg>
<svg style="left:1045px;top:109px" width="9" height="6"><path d="M0.8 5 L4.5 1.2 L8.2 5" fill="none" stroke="#555" stroke-width="1.2"/></svg>
<svg style="left:17px;top:48px" width="26" height="28"><rect x="0.8" y="3.6" width="19" height="22" rx="1" fill="#EBC47A"/><path d="M4 2.5 H16 V6.5 H4 Z" fill="#7B7B7B"/><rect x="8" y="0.8" width="4" height="3" rx="1" fill="#7B7B7B"/><path d="M14.2 13.2 H21.5 L24.6 16.3 V27 H14.2 Z" fill="#fff" stroke="#9A9A9A" stroke-width="0.9"/></svg>
<div class="a" style="left:12.00px;top:75.50px;width:31.00px;height:0.80px;background:#D6D6D6;"></div>
<div class="a t" style="left:16.78px;top:79.00px;font-size:8.70px;color:#444444;transform:scaleX(0.9645);">Colar</div>
<svg style="left:25px;top:91.8px" width="4" height="3"><path d="M0 0 H4 L2 2.3 Z" fill="#777"/></svg>
<svg style="left:50px;top:50px" width="13" height="13"><path d="M3 0.5 L8.5 8 M10 0.5 L4.5 8" stroke="#6A6A6A" stroke-width="1.1"/><circle cx="3.5" cy="10" r="2.2" fill="none" stroke="#3C7FC8" stroke-width="1.2"/><circle cx="9.5" cy="10" r="2.2" fill="none" stroke="#3C7FC8" stroke-width="1.2"/></svg>
<svg style="left:49.5px;top:68.5px" width="13" height="14"><path d="M1 0.5 H5.5 L7 2 V10 H1 Z" fill="#fff" stroke="#9A9A9A" stroke-width="0.8"/><path d="M4.5 3.5 H9.5 L11.5 5.5 V13 H4.5 Z" fill="#fff" stroke="#9A9A9A" stroke-width="0.8"/><rect x="6" y="6" width="4" height="6" fill="#BBD3EC"/><rect x="2" y="2" width="2" height="7" fill="#BBD3EC"/></svg>
<svg style="left:68px;top:74.5px" width="4" height="3"><path d="M0 0 H4 L2 2.3 Z" fill="#777"/></svg>
<svg style="left:50px;top:89.5px" width="13" height="11"><path d="M0.5 6 L5 2.5 L8.5 6.5 L4.5 10.5 Z" fill="#EBC47A"/><path d="M6 3 L10.5 -0.5 L12.5 1.5 L8 5.5 Z" fill="#6E6E6E"/></svg>
<div class="a" style="left:89.50px;top:54.60px;width:100.50px;height:16.90px;background:#FFFFFF;box-sizing:border-box;border:1px solid #D8D8D8;"></div>
<div class="a" style="left:157.00px;top:55.50px;width:1.00px;height:15.00px;background:#E2E2E2;"></div>
<div class="a t" style="left:91.76px;top:60.00px;font-size:9.13px;color:#444;transform:scaleX(0.9601);">Calibri</div>
<svg style="left:151.7px;top:61.599999999999994px" width="4" height="3"><path d="M0 0 H4 L2 2.3 Z" fill="#555"/></svg>
<svg style="left:184px;top:61.599999999999994px" width="4" height="3"><path d="M0 0 H4 L2 2.3 Z" fill="#555"/></svg>
<div class="a t" style="left:159.88px;top:60.00px;font-size:9.13px;color:#444;transform:scaleX(0.9090);">10</div>
<div class="a t" style="left:198.00px;top:57.00px;font-size:12.46px;color:#C8C8C8;transform:scaleX(0.9411);">A</div>
<svg style="left:202px;top:55.5px" width="5" height="3"><path d="M0.5 2.5 L2.5 0.5 L4.5 2.5" fill="none" stroke="#C8C8C8" stroke-width="0.9"/></svg>
<div class="a t" style="left:221.60px;top:57.00px;font-size:12.46px;color:#C8C8C8;transform:scaleX(0.8928);">A</div>
<svg style="left:226px;top:55.5px" width="5" height="3"><path d="M0.5 0.5 L2.5 2.5 L4.5 0.5" fill="none" stroke="#C8C8C8" stroke-width="0.9"/></svg>
<div class="a t" style="left:95.81px;top:84.00px;font-size:11.88px;color:#A2A2A2;font-weight:bold;transform:scaleX(1.2836);">N</div>
<div class="a t" style="left:120.5px;top:82.5px;font-size:12px;font-family:'Liberation Serif';font-style:italic;color:#A8A8A8">I</div>
<div class="a t" style="left:143.09px;top:84.00px;font-size:11.01px;color:#A2A2A2;transform:scaleX(1.0331);">S</div>
<div class="a" style="left:143.20px;top:94.30px;width:7.40px;height:0.80px;background:#A2A2A2;"></div>
<svg style="left:156.5px;top:87.6px" width="4" height="3"><path d="M0 0 H4 L2 2.3 Z" fill="#BBB"/></svg>
<svg style="left:166px;top:82.5px" width="12" height="12.5"><rect x="0.6" y="0.6" width="10.8" height="11.3" fill="none" stroke="#E6D9E3" stroke-width="1.2"/><path d="M6 0.6 V12 M0.6 6.2 H11.4" stroke="#E6D9E3" stroke-width="1"/></svg>
<svg style="left:181.6px;top:87.6px" width="4" height="3"><path d="M0 0 H4 L2 2.3 Z" fill="#BBB"/></svg>
<svg style="left:192px;top:82.5px" width="12" height="11"><path d="M1 5 L5.5 0.8 L10.5 5.8 L6 10.2 Z" fill="none" stroke="#C2C2C2" stroke-width="1.1"/><path d="M10.5 6 Q11.5 8 10.8 9" stroke="#C2C2C2" stroke-width="1" fill="none"/></svg>
<svg style="left:206.8px;top:87.6px" width="4" height="3"><path d="M0 0 H4 L2 2.3 Z" fill="#BBB"/></svg>
<div class="a t" style="left:217.80px;top:82.00px;font-size:13.19px;color:#A8A8A8;">A</div>
<svg style="left:231.7px;top:87.6px" width="4" height="3"><path d="M0 0 H4 L2 2.3 Z" fill="#BBB"/></svg>
<div class="a" style="left:249.00px;top:56.00px;width:11.00px;height:5.60px;background:#E1E1E1;"></div>
<div class="a" style="left:249.00px;top:57.40px;width:1.20px;height:0.60px;background:#F3F3F3;"></div>
<div class="a" style="left:258.80px;top:57.40px;width:1.20px;height:0.60px;background:#F3F3F3;"></div>
<div class="a" style="left:249.00px;top:59.30px;width:1.20px;height:0.60px;background:#F3F3F3;"></div>
<div class="a" style="left:258.80px;top:59.30px;width:1.20px;height:0.60px;background:#F3F3F3;"></div>
<div class="a" style="left:272.00px;top:60.00px;width:11.30px;height:5.60px;background:#E1E1E1;"></div>
<div class="a" style="left:272.00px;top:61.40px;width:1.20px;height:0.60px;background:#F3F3F3;"></div>
<div class="a" style="left:282.10px;top:61.40px;width:1.20px;height:0.60px;background:#F3F3F3;"></div>
<div class="a" style="left:272.00px;top:63.30px;width:1.20px;height:0.60px;background:#F3F3F3;"></div>
<div class="a" style="left:282.10px;top:63.30px;width:1.20px;height:0.60px;background:#F3F3F3;"></div>
<div class="a" style="left:295.00px;top:63.80px;width:11.70px;height:5.60px;background:#E1E1E1;"></div>
<div class="a" style="left:295.00px;top:65.20px;width:1.20px;height:0.60px;background:#F3F3F3;"></div>
<div class="a" style="left:305.50px;top:65.20px;width:1.20px;height:0.60px;background:#F3F3F3;"></div>
<div class="a" style="left:295.00px;top:67.10px;width:1.20px;height:0.60px;background:#F3F3F3;"></div>
<div class="a" style="left:305.50px;top:67.10px;width:1.20px;height:0.60px;background:#F3F3F3;"></div>
<svg style="left:317px;top:55px" width="20" height="15"><text x="0" y="0" font-size="7.5" font-family="Liberation Sans" fill="#ABABAB" transform="translate(4.5 10.5) rotate(-58)">ab</text><path d="M5.5 14 L13.5 5.5" stroke="#ABABAB" stroke-width="0.9"/><path d="M10.6 5.2 L13.8 5 L13.6 8.2" fill="none" stroke="#ABABAB" stroke-width="0.9"/><path d="M16.5 7.5 H19 L17.75 9 Z" fill="#BBB"/></svg>
<div class="a" style="left:249.00px;top:84.00px;width:11.00px;height:8.80px;background:#E1E1E1;"></div>
<div class="a" style="left:257.00px;top:85.40px;width:3.00px;height:0.60px;background:#F3F3F3;"></div>
<div class="a" style="left:257.00px;top:87.20px;width:3.00px;height:0.60px;background:#F3F3F3;"></div>
<div class="a" style="left:257.00px;top:89.00px;width:3.00px;height:0.60px;background:#F3F3F3;"></div>
<div class="a" style="left:257.00px;top:90.80px;width:3.00px;height:0.60px;background:#F3F3F3;"></div>
<div class="a" style="left:272.00px;top:84.00px;width:11.30px;height:8.80px;background:#E1E1E1;"></div>
<div class="a" style="left:272.00px;top:85.40px;width:1.50px;height:0.60px;background:#F3F3F3;"></div>
<div class="a" style="left:281.80px;top:85.40px;width:1.50px;height:0.60px;background:#F3F3F3;"></div>
<div class="a" style="left:272.00px;top:87.20px;width:1.50px;height:0.60px;background:#F3F3F3;"></div>
<div class="a" style="left:281.80px;top:87.20px;width:1.50px;height:0.60px;background:#F3F3F3;"></div>
<div class="a" style="left:272.00px;top:89.00px;width:1.50px;height:0.60px;background:#F3F3F3;"></div>
<div class="a" style="left:281.80px;top:89.00px;width:1.50px;height:0.60px;background:#F3F3F3;"></div>
<div class="a" style="left:272.00px;top:90.80px;width:1.50px;height:0.60px;background:#F3F3F3;"></div>
<div class="a" style="left:281.80px;top:90.80px;width:1.50px;height:0.60px;background:#F3F3F3;"></div>
<div class="a" style="left:295.00px;top:84.00px;width:11.70px;height:8.80px;background:#E1E1E1;"></div>
<div class="a" style="left:295.00px;top:85.40px;width:3.00px;height:0.60px;background:#F3F3F3;"></div>
<div class="a" style="left:295.00px;top:87.20px;width:3.00px;height:0.60px;background:#F3F3F3;"></div>
<div class="a" style="left:295.00px;top:89.00px;width:3.00px;height:0.60px;background:#F3F3F3;"></div>
<div class="a" style="left:295.00px;top:90.80px;width:3.00px;height:0.60px;background:#F3F3F3;"></div>
<div class="a" style="left:317.80px;top:84.00px;width:13.00px;height:8.80px;background:#E3E3E3;"></div>
<div class="a" style="left:317.80px;top:84.00px;width:5.20px;height:8.80px;background:#F0F0F0;"></div>
<svg style="left:317.8px;top:84px" width="8" height="9"><path d="M6.5 4.4 H1.2 M3.6 2 L1.2 4.4 L3.6 6.8" fill="none" stroke="#A4A4A4" stroke-width="1.1"/></svg>
<div class="a" style="left:341.00px;top:84.00px;width:13.20px;height:8.80px;background:#E3E3E3;"></div>
<div class="a" style="left:341.00px;top:84.00px;width:5.50px;height:8.80px;background:#F0F0F0;"></div>
<svg style="left:341px;top:84px" width="8" height="9"><path d="M0.8 4.4 H6 M3.6 2 L6 4.4 L3.6 6.8" fill="none" stroke="#A4A4A4" stroke-width="1.1"/></svg>
<svg style="left:366px;top:58px" width="11" height="11"><text x="0" y="5.5" font-size="6.5" font-family="Liberation Sans" fill="#C8C8C8">ab</text><text x="0" y="10.5" font-size="6.5" font-family="Liberation Sans" fill="#C8C8C8">c</text><path d="M9.5 6.5 V9 H5.5 M7 7.8 L5.5 9 L7 10.2" fill="none" stroke="#C8C8C8" stroke-width="0.8"/></svg>
<div class="a t" style="left:379.21px;top:60.00px;font-size:9.71px;color:#B5B5B5;transform:scaleX(0.8870);">Quebrar Texto Automaticamente</div>
<svg style="left:363px;top:82px" width="14" height="14"><rect x="0.6" y="0.6" width="12.5" height="12.5" fill="none" stroke="#E6D9E3" stroke-width="1.1"/><path d="M0.6 4.5 H13 M0.6 9.5 H13 M7 0.6 V4.5 M7 9.5 V13" stroke="#E6D9E3" stroke-width="1"/><path d="M2 7 H12 M4 5 L2 7 L4 9 M10 5 L12 7 L10 9" fill="none" stroke="#BDBDBD" stroke-width="0.9"/></svg>
<div class="a t" style="left:378.23px;top:85.00px;font-size:9.28px;color:#B5B5B5;transform:scaleX(0.8989);">Mesclar e Centralizar</div>
<svg style="left:464.4px;top:87.6px" width="4" height="3"><path d="M0 0 H4 L2 2.3 Z" fill="#BBB"/></svg>
<div class="a" style="left:514.80px;top:54.60px;width:118.50px;height:16.90px;background:#FFFFFF;box-sizing:border-box;border:1px solid #D8D8D8;"></div>
<svg style="left:627.5px;top:61.599999999999994px" width="4" height="3"><path d="M0 0 H4 L2 2.3 Z" fill="#999"/></svg>
<svg style="left:519px;top:82.5px" width="13" height="13"><rect x="0.5" y="0.5" width="11.5" height="7.5" fill="#D0D0D0"/><rect x="2" y="2" width="8.5" height="4.5" fill="#F0F0F0"/><circle cx="6.2" cy="4.2" r="1.6" fill="#9C9C9C"/><rect x="3" y="9" width="7" height="1.5" fill="#E0E0E0"/><rect x="3" y="11.2" width="7" height="1.5" fill="#E8E8E8"/></svg>
<svg style="left:534.7px;top:87.6px" width="4" height="3"><path d="M0 0 H4 L2 2.3 Z" fill="#777"/></svg>
<div class="a t" style="left:545.53px;top:83.00px;font-size:13.91px;color:#8E8E8E;transform:scaleX(0.9642);">%</div>
<div class="a t" style="left:568.44px;top:85.00px;font-size:7.83px;color:#BDBDBD;transform:scaleX(0.9453);">000</div>
<svg style="left:591.5px;top:81.5px" width="15" height="15"><path d="M1 3.8 H5.2 M3.2 1.6 L1 3.8 L3.2 6" fill="none" stroke="#999" stroke-width="1.2"/><text x="5.2" y="7" font-size="7.6" font-family="Liberation Sans" fill="#ABABAB">,0</text><text x="0.8" y="13.8" font-size="7.6" font-family="Liberation Sans" fill="#ABABAB">,00</text></svg>
<svg style="left:614.5px;top:81.5px" width="15" height="15"><text x="1.5" y="7" font-size="7.6" font-family="Liberation Sans" fill="#ABABAB">,00</text><path d="M0.8 10.6 H5.4 M3.2 8.4 L5.4 10.6 L3.2 12.8" fill="none" stroke="#999" stroke-width="1.2"/><text x="5.6" y="13.8" font-size="7.6" font-family="Liberation Sans" fill="#ABABAB">,0</text></svg>
<svg style="left:653px;top:50px" width="28" height="26"><rect x="0.5" y="0.5" width="22" height="21" fill="#F7F1F5" stroke="#E6D9E3" stroke-width="1"/><path d="M0.5 5 H22 M0.5 9.5 H22 M0.5 14 H22 M0.5 18 H22 M7 0.5 V21 M16 0.5 V21" stroke="#E6D9E3" stroke-width="0.8"/><path d="M8 0.5 H12 V6 H14.5 V13 H12 V21 H8 Z" fill="#ABABAB"/><rect x="13.5" y="14" width="13.5" height="11.5" fill="#F6F6F6" stroke="#D4CDD2" stroke-width="1"/><text x="16" y="23.5" font-size="10" font-family="Liberation Sans" fill="#999">≠</text></svg>
<div class="a t" style="left:643.13px;top:78.00px;font-size:8.84px;color:#B5B5B5;transform:scaleX(0.9479);">Formatação</div>
<div class="a t" style="left:639.87px;top:89.00px;font-size:8.84px;color:#B5B5B5;transform:scaleX(0.9664);">Condicional</div>
<svg style="left:687.3px;top:91.8px" width="4" height="3"><path d="M0 0 H4 L2 2.3 Z" fill="#C0C0C0"/></svg>
<svg style="left:708px;top:50px" width="29" height="26"><rect x="0.5" y="0.5" width="24" height="20" fill="#F7F1F5" stroke="#E6D9E3" stroke-width="1"/><path d="M0.5 5 H24.5 M0.5 10 H24.5 M0.5 15 H24.5 M6.5 0.5 V20.5 M12.5 0.5 V20.5 M18.5 0.5 V20.5" stroke="#E6D9E3" stroke-width="0.8"/><rect x="6.5" y="5" width="18" height="15.5" fill="#D8D8D8" opacity="0.8"/><path d="M27.5 7 L17 20 L14 23 L9 25.5 L11 20.5 L14 17.5 Z" fill="#ADADAD"/><path d="M14 17.5 L17 20.5" stroke="#F3F3F3" stroke-width="1.2"/></svg>
<div class="a t" style="left:692.93px;top:78.00px;font-size:8.84px;color:#B5B5B5;transform:scaleX(0.9528);">Formatar como</div>
<div class="a t" style="left:707.34px;top:89.00px;font-size:8.84px;color:#B5B5B5;transform:scaleX(0.8841);">Tabela</div>
<svg style="left:733px;top:91.8px" width="4" height="3"><path d="M0 0 H4 L2 2.3 Z" fill="#C0C0C0"/></svg>
<svg style="left:758px;top:50px" width="28" height="26"><rect x="0.5" y="0.5" width="23.5" height="20" fill="#F7F1F5" stroke="#E6D9E3" stroke-width="1"/><path d="M0.5 5 H24 M0.5 16 H24 M5.5 0.5 V20.5 M19 0.5 V20.5" stroke="#E6D9E3" stroke-width="0.8"/><rect x="6" y="5.5" width="12.5" height="10" fill="#D6D6D6"/><path d="M27.5 7 L17 20 L14 23 L9 25.5 L11 20.5 L14 17.5 Z" fill="#ADADAD"/><path d="M14 17.5 L17 20.5" stroke="#F3F3F3" stroke-width="1.2"/></svg>
<div class="a t" style="left:752.33px;top:78.00px;font-size:8.84px;color:#B5B5B5;transform:scaleX(0.9446);">Estilos de</div>
<div class="a t" style="left:755.38px;top:89.00px;font-size:8.84px;color:#B5B5B5;transform:scaleX(0.9487);">Célula</div>
<svg style="left:781.7px;top:91.8px" width="4" height="3"><path d="M0 0 H4 L2 2.3 Z" fill="#C0C0C0"/></svg>
<svg style="left:798px;top:47px" width="30" height="28"><rect x="3.5" y="2.0" width="14" height="4.6" rx="1" fill="#F5EEF3" stroke="#E3D6E0" stroke-width="0.9"/><path d="M10.5 2.0 V6.6" stroke="#E3D6E0" stroke-width="0.8"/><rect x="3.5" y="17.0" width="14" height="8.6" rx="1" fill="#F5EEF3" stroke="#E3D6E0" stroke-width="0.9"/><path d="M10.5 17.0 V25.6" stroke="#E3D6E0" stroke-width="0.8"/><path d="M3.5 21.3 H17.5" stroke="#E3D6E0" stroke-width="0.8"/><rect x="14.3" y="9" width="13.3" height="5.6" rx="0.8" fill="#D9D9D9"/><path d="M21 9 V14.6" stroke="#EDEDED" stroke-width="0.8"/><path d="M2.5 12 H13.5" stroke="#ABABAB" stroke-width="2"/><path d="M6.5 8 L2.3 12 L6.5 16" fill="none" stroke="#ABABAB" stroke-width="2"/></svg>
<div class="a" style="left:798.00px;top:75.20px;width:30.00px;height:0.80px;background:#DEDEDE;"></div>
<div class="a t" style="left:800.81px;top:79.00px;font-size:8.84px;color:#444444;transform:scaleX(0.9895);">Inserir</div>
<svg style="left:811px;top:91.8px" width="4" height="3"><path d="M0 0 H4 L2 2.3 Z" fill="#777"/></svg>
<svg style="left:834px;top:47px" width="30" height="28"><rect x="2.5" y="2.0" width="13.5" height="4.6" rx="1" fill="#F5EEF3" stroke="#E3D6E0" stroke-width="0.9"/><path d="M9.25 2.0 V6.6" stroke="#E3D6E0" stroke-width="0.8"/><rect x="2.5" y="17.0" width="13.5" height="8.6" rx="1" fill="#F5EEF3" stroke="#E3D6E0" stroke-width="0.9"/><path d="M9.25 17.0 V25.6" stroke="#E3D6E0" stroke-width="0.8"/><path d="M2.5 21.3 H16.0" stroke="#E3D6E0" stroke-width="0.8"/><rect x="7" y="9" width="10" height="5.6" rx="0.8" fill="#D9D9D9"/><path d="M16.3 6.3 L28.5 18.5 M28.5 6.3 L16.3 18.5" stroke="#ABABAB" stroke-width="1.8"/></svg>
<div class="a" style="left:834.00px;top:75.20px;width:30.00px;height:0.80px;background:#DEDEDE;"></div>
<svg style="left:872px;top:47.5px" width="26" height="27"><path d="M2.2 2.8 H19.8" stroke="#4A86C8" stroke-width="1.3"/><path d="M5 0.6 L2 2.8 L5 5 M17 0.6 L20 2.8 L17 5" fill="none" stroke="#4A86C8" stroke-width="1.3"/><path d="M1 0.5 V5.2 M21 0.5 V5.2" stroke="#A9C4E4" stroke-width="0.7"/><rect x="0.5" y="5.5" width="24" height="18" rx="1" fill="#fff" stroke="#C9C9C9" stroke-width="0.9"/><path d="M0.5 10.5 H24.5 M0.5 18.2 H24.5 M6.5 5.5 V23.5 M12.5 5.5 V23.5 M18.5 5.5 V23.5" stroke="#E0E0E0" stroke-width="0.7"/><rect x="7" y="10.5" width="6.7" height="7.8" fill="#3C7CC4"/><path d="M1 23.5 Q1.5 26 5.5 25.5 H11 L13 23.5 M13 23.5 Q14 26 17 25.5 H22 L24 23.5" fill="#fff" stroke="#C9C9C9" stroke-width="0.8"/></svg>
<div class="a t" style="left:836.35px;top:79.00px;font-size:8.84px;color:#444444;transform:scaleX(0.9135);">Excluir</div>
<svg style="left:847px;top:91.8px" width="4" height="3"><path d="M0 0 H4 L2 2.3 Z" fill="#777"/></svg>
<div class="a t" style="left:867.03px;top:79.00px;font-size:9.28px;color:#444444;transform:scaleX(0.9027);">Formatar</div>
<svg style="left:882px;top:91.8px" width="4" height="3"><path d="M0 0 H4 L2 2.3 Z" fill="#777"/></svg>
<svg style="left:913px;top:49px" width="12" height="12"><path d="M10.5 1.5 V0.6 H0.8 L5.8 5.8 L0.8 11 H10.5 V10" fill="none" stroke="#8C8C8C" stroke-width="1.1"/></svg>
<svg style="left:931.7px;top:54.3px" width="4" height="3"><path d="M0 0 H4 L2 2.3 Z" fill="#777"/></svg>
<svg style="left:912.5px;top:66.5px" width="15" height="14"><rect x="0.6" y="1.5" width="12.8" height="12" fill="#fff" stroke="#9C9C9C" stroke-width="0.9"/><rect x="0.6" y="0.5" width="12.8" height="1.6" fill="#666"/><path d="M7 4 V11 M4.3 8.3 L7 11 L9.7 8.3" fill="none" stroke="#2F75C6" stroke-width="1.4"/></svg>
<svg style="left:928px;top:72.3px" width="4" height="3"><path d="M0 0 H4 L2 2.3 Z" fill="#777"/></svg>
<svg style="left:914.5px;top:86px" width="12" height="11"><path d="M0.8 7.5 L6.8 1.2 Q7.6 0.4 8.4 1.2 L10.8 3.6 Q11.6 4.4 10.8 5.2 L5 11 Q4.2 11.6 3.4 10.8 L0.8 8.8 Q0.2 8.1 0.8 7.5 Z" fill="#E8798C"/></svg>
<svg style="left:928px;top:90.3px" width="4" height="3"><path d="M0 0 H4 L2 2.3 Z" fill="#777"/></svg>
<div class="a t" style="left:947.98px;top:49.00px;font-size:14.20px;color:#3A78C3;font-weight:bold;transform:scaleX(0.9075);">A</div>
<div class="a t" style="left:947.64px;top:61.00px;font-size:13.04px;color:#8E4BB8;font-weight:bold;transform:scaleX(1.0952);">Z</div>
<svg style="left:959px;top:55px" width="14" height="13"><path d="M0.5 0.5 H13 L8.3 5.5 V12.5 H5.2 V5.5 Z" fill="#7A7A7A"/></svg>
<div class="a t" style="left:941.10px;top:78.00px;font-size:8.99px;color:#444444;transform:scaleX(0.8977);">Classificar</div>
<div class="a t" style="left:942.26px;top:89.00px;font-size:8.99px;color:#444444;transform:scaleX(0.9444);">e Filtrar</div>
<svg style="left:973.5px;top:91.8px" width="4" height="3"><path d="M0 0 H4 L2 2.3 Z" fill="#777"/></svg>
<svg style="left:990.5px;top:48.5px" width="26" height="25"><circle cx="15.2" cy="9.3" r="7.8" fill="#fff" stroke="#3A78C3" stroke-width="2"/><path d="M9.5 15 L2.2 22.3" stroke="#3A78C3" stroke-width="2.8" stroke-linecap="round"/></svg>
<div class="a t" style="left:983.15px;top:78.00px;font-size:8.99px;color:#444444;transform:scaleX(0.9087);">Localizar e</div>
<div class="a t" style="left:980.43px;top:89.00px;font-size:8.99px;color:#444444;transform:scaleX(0.9161);">Selecionar</div>
<svg style="left:1022px;top:91.8px" width="4" height="3"><path d="M0 0 H4 L2 2.3 Z" fill="#777"/></svg>
<div class="a" style="left:4.00px;top:125.60px;width:70.30px;height:14.40px;background:#FFFFFF;"></div>
<div class="a t" style="left:6.30px;top:128.00px;font-size:9.42px;color:#333;transform:scaleX(0.9687);">AB19</div>
<svg style="left:65.5px;top:130.5px" width="6" height="4"><path d="M0 0 H5.5 L2.75 3 Z" fill="#555"/></svg>
<div class="a" style="left:85.00px;top:129.30px;width:1.20px;height:1.20px;background:#9A9A9A;"></div>
<div class="a" style="left:85.00px;top:132.30px;width:1.20px;height:1.20px;background:#9A9A9A;"></div>
<div class="a" style="left:85.00px;top:135.30px;width:1.20px;height:1.20px;background:#9A9A9A;"></div>
<div class="a" style="left:96.70px;top:125.60px;width:75.80px;height:14.40px;background:#FFFFFF;"></div>
<svg style="left:105px;top:128.5px" width="9" height="9"><path d="M0.6 0.6 L8 8 M8 0.6 L0.6 8" stroke="#A0A0A0" stroke-width="1.1"/></svg>
<svg style="left:130.5px;top:128.5px" width="9" height="8.5"><path d="M0.6 4.2 L3.2 7 L8.5 0.8" fill="none" stroke="#ABABAB" stroke-width="1.4"/></svg>
<div class="a t" style="left:155.5px;top:126.8px;font-size:12px;font-family:'Liberation Serif';font-style:italic;color:#444;letter-spacing:0.3px">fx</div>
<div class="a" style="left:175.90px;top:125.60px;width:880.10px;height:14.40px;background:#FFFFFF;"></div>
<svg style="left:1047px;top:131px" width="8" height="5"><path d="M0.8 0.8 L3.8 3.8 L6.8 0.8" fill="none" stroke="#555" stroke-width="1.2"/></svg>
<div class="a" style="left:1046.50px;top:147.00px;width:13.50px;height:493.00px;background:#DCDCDC;"></div>
<div class="a" style="left:1047.80px;top:148.50px;width:10.60px;height:10.50px;background:#FFFFFF;"></div>
<svg style="left:1050.5px;top:152px" width="6" height="4"><path d="M0 3.5 H5.5 L2.75 0.5 Z" fill="#555"/></svg>
<div class="a" style="left:1047.80px;top:159.80px;width:10.60px;height:10.90px;background:#FFFFFF;"></div>
<div class="a" style="left:1047.80px;top:629.80px;width:10.60px;height:10.20px;background:#FFFFFF;"></div>
<svg style="left:1050.5px;top:633.5px" width="6" height="4"><path d="M0 0.5 H5.5 L2.75 3.5 Z" fill="#555"/></svg>
<div class="a" style="left:0.00px;top:640.00px;width:1060.00px;height:15.00px;background:#E6E6E6;"></div>
<div class="a" style="left:0.00px;top:640.00px;width:1046.50px;height:0.80px;background:#D4D4D4;"></div>
<svg style="left:9px;top:645.5px" width="4" height="6"><path d="M3.5 0.5 L0.8 3 L3.5 5.5" fill="none" stroke="#C0C0C0" stroke-width="0.9"/></svg>
<svg style="left:27px;top:645.5px" width="4" height="6"><path d="M0.5 0.5 L3.2 3 L0.5 5.5" fill="none" stroke="#C0C0C0" stroke-width="0.9"/></svg>
<div class="a" style="left:51.30px;top:640.50px;width:101.90px;height:14.00px;background:#FFFFFF;"></div>
<div class="a" style="left:51.30px;top:652.80px;width:101.90px;height:1.70px;background:#217346;"></div>
<div class="a t" style="left:55.20px;top:643.00px;font-size:9.42px;color:#217346;font-weight:bold;transform:scaleX(0.9735);">Desafio_52_Semanas</div>
<div class="a t" style="left:157.79px;top:643.00px;font-size:9.42px;color:#505050;transform:scaleX(0.9445);">Rel</div>
<div class="a t" style="left:180.26px;top:643.00px;font-size:9.42px;color:#505050;transform:scaleX(0.9866);">Dash</div>
<div class="a t" style="left:210.63px;top:643.00px;font-size:9.42px;color:#505050;transform:scaleX(1.1484);">INI</div>
<div class="a t" style="left:232.94px;top:643.00px;font-size:9.42px;color:#505050;">DUV</div>
<div class="a t" style="left:262.11px;top:643.00px;font-size:9.42px;color:#505050;transform:scaleX(0.9269);">SUG</div>
<div class="a t" style="left:289.77px;top:643.00px;font-size:9.42px;color:#505050;transform:scaleX(0.9661);">LUZ</div>
<div class="a" style="left:176.50px;top:641.50px;width:1.00px;height:12.00px;background:#C8C8C8;"></div>
<div class="a" style="left:206.50px;top:641.50px;width:1.00px;height:12.00px;background:#C8C8C8;"></div>
<div class="a" style="left:229.10px;top:641.50px;width:1.00px;height:12.00px;background:#C8C8C8;"></div>
<div class="a" style="left:258.30px;top:641.50px;width:1.00px;height:12.00px;background:#C8C8C8;"></div>
<div class="a" style="left:285.40px;top:641.50px;width:1.00px;height:12.00px;background:#C8C8C8;"></div>
<div class="a" style="left:311.80px;top:641.50px;width:1.00px;height:12.00px;background:#C8C8C8;"></div>
<svg style="left:328px;top:642.5px" width="13" height="13"><circle cx="6.3" cy="6.2" r="5.3" fill="none" stroke="#777" stroke-width="1"/><path d="M6.3 3.2 V9.2 M3.3 6.2 H9.3" stroke="#777" stroke-width="1.1"/></svg>
<div class="a" style="left:874.60px;top:645.00px;width:1.00px;height:1.00px;background:#A0A0A0;"></div>
<div class="a" style="left:874.60px;top:648.00px;width:1.00px;height:1.00px;background:#A0A0A0;"></div>
<div class="a" style="left:874.60px;top:651.00px;width:1.00px;height:1.00px;background:#A0A0A0;"></div>
<div class="a" style="left:883.60px;top:642.80px;width:160.90px;height:10.80px;background:#DADADA;"></div>
<div class="a" style="left:883.60px;top:642.80px;width:10.40px;height:10.80px;background:#FFFFFF;"></div>
<div class="a" style="left:894.50px;top:642.80px;width:82.50px;height:10.80px;background:#FFFFFF;"></div>
<div class="a" style="left:1034.00px;top:642.80px;width:10.50px;height:10.80px;background:#FFFFFF;"></div>
<svg style="left:887px;top:645.5px" width="4" height="6"><path d="M3.5 0 V5.5 L0.5 2.75 Z" fill="#444"/></svg>
<svg style="left:1038px;top:645.5px" width="4" height="6"><path d="M0.5 0 V5.5 L3.5 2.75 Z" fill="#444"/></svg>
<div class="a" style="left:0.00px;top:655.00px;width:1060.00px;height:23.00px;background:#F3F3F3;"></div>
<div class="a" style="left:0.00px;top:655.00px;width:1060.00px;height:0.80px;background:#DADADA;"></div>
<div class="a t" style="left:3.88px;top:664.00px;font-size:8.99px;color:#555;transform:scaleX(0.8627);">Pronto</div>
<svg style="left:39px;top:660px" width="14" height="13"><rect x="2" y="3.5" width="11" height="9" fill="#fff" stroke="#AFAFAF" stroke-width="0.9"/><path d="M5.5 3.5 V12.5 M9 3.5 V12.5 M2 6.5 H13" stroke="#C4C4C4" stroke-width="0.8"/><circle cx="3.5" cy="2.5" r="2.2" fill="#7F7F7F"/><rect x="6" y="1" width="7" height="3" fill="#8C8C8C"/></svg>
<div class="a" style="left:872.30px;top:656.00px;width:22.60px;height:21.50px;background:#CFCFCF;"></div>
<svg style="left:877px;top:661px" width="13" height="13"><rect x="0.5" y="0.5" width="11.5" height="11.5" fill="#D9D9D9" stroke="#8F8F8F" stroke-width="0.9"/><path d="M4.3 0.5 V12 M8.2 0.5 V12 M0.5 4.3 H12 M0.5 8.2 H12" stroke="#8F8F8F" stroke-width="0.8"/></svg>
<svg style="left:900px;top:661px" width="13" height="12"><rect x="0.5" y="0.5" width="12" height="11" fill="none" stroke="#A8A8A8" stroke-width="0.9"/><rect x="3" y="2" width="7" height="8" fill="none" stroke="#A8A8A8" stroke-width="0.8"/><path d="M5.5 2 V10 M7.5 2 V10" stroke="#BDBDBD" stroke-width="0.6"/></svg>
<svg style="left:923px;top:661px" width="13" height="12"><rect x="0.5" y="0.5" width="12" height="11" fill="none" stroke="#A8A8A8" stroke-width="0.9"/><path d="M4.5 0.5 V6.5 H12.5 M8.5 0.5 V6.5 M0.5 6.5 H4.5" fill="none" stroke="#A8A8A8" stroke-width="0.8"/></svg>
<div class="a" style="left:945.00px;top:666.50px;width:4.00px;height:1.50px;background:#666;"></div>
<div class="a" style="left:952.50px;top:667.00px;width:69.50px;height:1.00px;background:#C2C2C2;"></div>
<div class="a" style="left:986.00px;top:663.00px;width:3.50px;height:8.50px;background:#6A6A6A;"></div>
<div class="a" style="left:1024.50px;top:666.70px;width:6.00px;height:1.30px;background:#666;"></div>
<div class="a" style="left:1026.85px;top:664.30px;width:1.30px;height:6.20px;background:#666;"></div>
<div class="a t" style="left:1036.88px;top:664.00px;font-size:8.99px;color:#444;transform:scaleX(0.7677);">100%</div>
<div class="a" style="left:0.00px;top:678.00px;width:1060.00px;height:5.00px;background:#141414;"></div>
<div class="a" style="left:1057.00px;top:678.00px;width:1.00px;height:5.00px;background:#888;"></div>
<svg style="left:33px;top:171px" width="15" height="21"><path d="M1.4 6 V5 Q1.4 1.2 5.4 1.2 H9.2 Q13 1.2 13 5 V6" fill="none" stroke="#fff" stroke-width="1.6"/><path d="M1.4 7.3 V12.5 Q1.4 15.3 4.2 15.6 H10.2 Q13 15.3 13 12.5 V7.3" fill="none" stroke="#fff" stroke-width="1.6"/><path d="M4.6 16.8 H9.8 L8.6 19.6 H5.8 Z" fill="#D0D0D0"/></svg>
<div class="a t" style="left:49.99px;top:175.00px;font-size:11.88px;color:#FFFFFF;transform:scaleX(0.8509);-webkit-text-stroke:0.35px #fff;">LUZ</div>
<div class="a" style="left:72.30px;top:175.00px;width:0.90px;height:11.00px;background:#9A9A9A;"></div>
<div class="a t" style="left:75.95px;top:177.00px;font-size:5.22px;color:#B8B8B8;transform:scaleX(0.8405);">Planilhas</div>
<div class="a t" style="left:75.95px;top:182.00px;font-size:5.22px;color:#B8B8B8;transform:scaleX(0.8478);">Empresariais</div>
<div class="a t" style="left:137.84px;top:171.00px;font-size:10.14px;color:#FFFFFF;font-weight:bold;transform:scaleX(0.8559);">DESAFIO 52</div>
<div class="a t" style="left:141.18px;top:184.00px;font-size:10.14px;color:#FFFFFF;font-weight:bold;transform:scaleX(0.8620);">SEMANAS</div>
<div class="a t" style="left:215.24px;top:177.00px;font-size:10.14px;color:#FFFFFF;font-weight:bold;transform:scaleX(0.8424);">RELATÓRIO</div>
<div class="a t" style="left:290.04px;top:177.00px;font-size:10.00px;color:#FFFFFF;font-weight:bold;transform:scaleX(0.8609);">DASHBOARD</div>
<div class="a t" style="left:368.56px;top:177.00px;font-size:10.00px;color:#FFFFFF;font-weight:bold;transform:scaleX(0.8288);">INSTRUÇÕES</div>
<div class="a t" style="left:116.64px;top:213.00px;font-size:10.14px;color:#333333;font-weight:bold;transform:scaleX(0.8419);">PLANEJAMENTO E FOLLOW UP</div>
<div class="a" style="left:922.30px;top:520.00px;width:63.20px;height:19.80px;background:transparent;box-sizing:border-box;border:1.6px solid #217346;"></div>
<div class="a" style="left:983.30px;top:537.30px;width:3.30px;height:3.30px;background:#217346;"></div>
</body></html>
